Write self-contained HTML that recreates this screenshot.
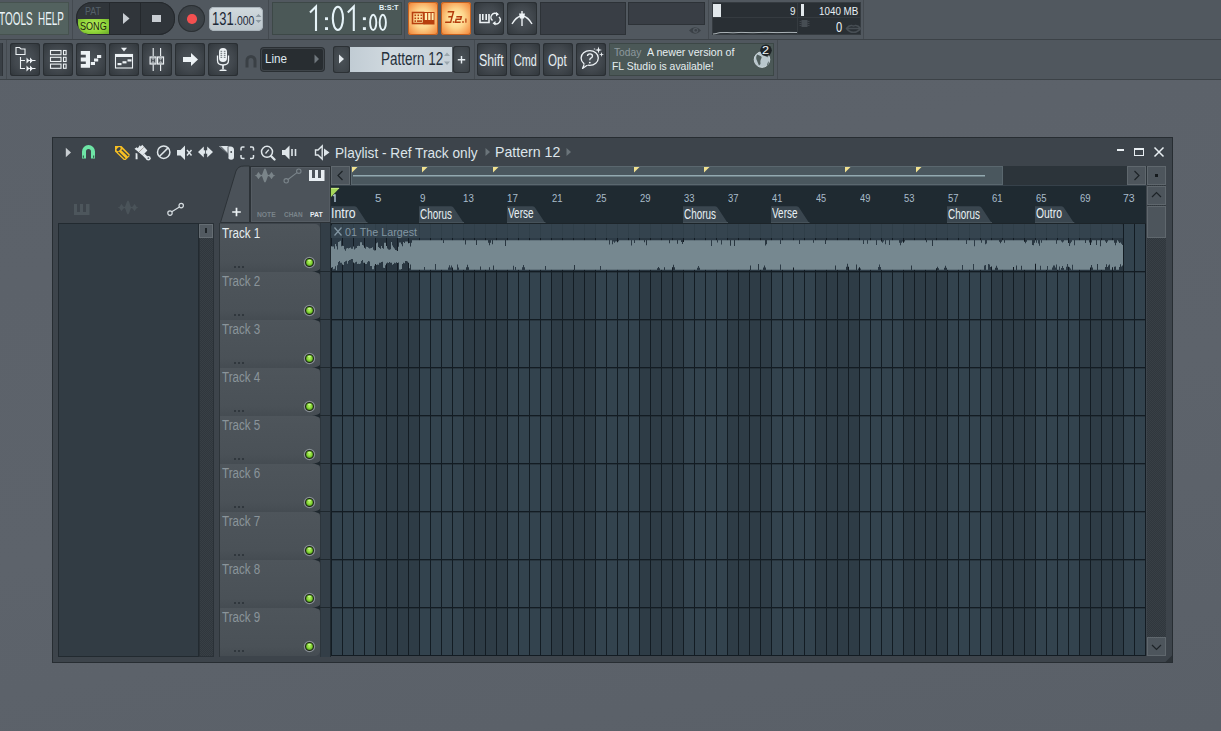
<!DOCTYPE html>
<html><head><meta charset="utf-8">
<style>
*{box-sizing:border-box;margin:0;padding:0}
html,body{width:1221px;height:731px;overflow:hidden}
body{position:relative;font-family:"Liberation Sans",sans-serif;background:linear-gradient(170deg,#5b6169 0%,#5d636b 60%,#5a6068 100%)}
.a{position:absolute}
.t{position:absolute;white-space:pre;line-height:1;transform-origin:0 0}
.dbtn{position:absolute;border-radius:3px;background:radial-gradient(ellipse 62% 62% at 50% 50%,#4b5258 0%,#42484e 55%,#343a3f 100%);box-shadow:inset 0 0 0 1px #2a2f33}
.obtn{position:absolute;border-radius:3px;background:radial-gradient(ellipse 65% 65% at 50% 50%,#fff5b8 0%,#fdd58c 45%,#f7a358 80%,#ee8a3e 100%);box-shadow:inset 0 0 0 1px #c8621f}
</style></head><body>

<svg width="0" height="0" style="position:absolute"><defs><radialGradient id="led" cx="50%" cy="45%" r="55%"><stop offset="0" stop-color="#b4f060"/><stop offset="0.6" stop-color="#86d636"/><stop offset="1" stop-color="#4e9a1c"/></radialGradient></defs></svg>
<div class="a" style="left:0px;top:0px;width:1221px;height:39px;background:#51585f"></div>
<div class="a" style="left:0px;top:39px;width:1221px;height:1px;background:#3c4247"></div>
<div class="a" style="left:0px;top:40px;width:1221px;height:39px;background:#50575e"></div>
<div class="a" style="left:0px;top:79px;width:1221px;height:1px;background:#3c4247"></div>
<div class="a" style="left:72px;top:0px;width:1px;height:39px;background:#444a50"></div>
<div class="a" style="left:268px;top:0px;width:1px;height:39px;background:#444a50"></div>
<div class="a" style="left:404px;top:0px;width:1px;height:39px;background:#444a50"></div>
<div class="a" style="left:708px;top:0px;width:1px;height:39px;background:#444a50"></div>
<div class="a" style="left:863px;top:0px;width:1px;height:39px;background:#444a50"></div>
<div class="a" style="left:6px;top:40px;width:1px;height:39px;background:#444a50"></div>
<div class="a" style="left:474px;top:40px;width:1px;height:39px;background:#444a50"></div>
<div class="a" style="left:777px;top:40px;width:1px;height:39px;background:#444a50"></div>
<div class="a" style="left:0px;top:2px;width:69px;height:33px;background:#53625f;border:1px solid #46524f;border-left:none"></div>
<div class="t" style="left:-1.20px;top:11.15px;font-size:17.66px;color:#eaf4f8;transform:scaleX(0.5670);">TOOLS</div>
<div class="t" style="left:38.20px;top:11.15px;font-size:17.66px;color:#eaf4f8;transform:scaleX(0.5602);">HELP</div>
<div class="a" style="left:76px;top:2px;width:99px;height:33px;background:#30353a;border-radius:16px;box-shadow:inset 0 0 0 1px #25292d"></div>
<div class="a" style="left:109px;top:3px;width:1px;height:31px;background:#24282c"></div>
<div class="a" style="left:140px;top:3px;width:1px;height:31px;background:#24282c"></div>
<div class="a" style="left:78px;top:19px;width:31px;height:15px;background:radial-gradient(ellipse 70% 80% at 50% 40%,#b8f060 0%,#8fd438 60%,#6aa82a 100%);border-bottom-left-radius:10px"></div>
<div class="t" style="left:85.28px;top:7.35px;font-size:10.22px;color:#55616a;transform:scaleX(0.8733);">PAT</div>
<div class="t" style="left:80.09px;top:21.23px;font-size:10.95px;color:#1c2410;transform:scaleX(0.8282);">SONG</div>
<svg class="a" style="left:122px;top:12px;" width="9" height="13" viewBox="0 0 9 13"><path d="M1 1 L7.5 6.5 L1 12 Z" fill="#c8cdd2"/></svg>
<div class="a" style="left:152px;top:15px;width:9px;height:7px;background:#c8cdd2"></div>
<div class="a" style="left:178px;top:5px;width:27px;height:27px;background:radial-gradient(circle at 50% 50%,#41474c 0%,#3a4045 70%,#33393e 100%);border-radius:50%;box-shadow:inset 0 0 0 1px #2b3034"></div>
<div class="a" style="left:187px;top:14px;width:9.5px;height:9.5px;background:#f45050;border-radius:50%"></div>
<div class="a" style="left:209px;top:7px;width:54px;height:24px;background:linear-gradient(#d2dade,#bcc6cc);border-radius:5px;box-shadow:inset 0 0 0 1px #aab4bb"></div>
<div class="t" style="left:212.03px;top:8.94px;font-size:18.98px;color:#1d2938;transform:scaleX(0.6821);">131</div>
<div class="t" style="left:234.06px;top:13.88px;font-size:13.14px;color:#1d2938;transform:scaleX(0.7946);">.000</div>
<svg class="a" style="left:255px;top:13px;" width="7" height="11" viewBox="0 0 7 11"><path d="M0.5 4 L3.5 1 L6.5 4 Z M0.5 7 L3.5 10 L6.5 7 Z" fill="#8e9aa2"/></svg>
<div class="a" style="left:272px;top:2px;width:130px;height:33px;background:#4b5857;box-shadow:inset 0 0 0 1px #3d4847"></div>
<svg class="a" style="left:300px;top:0px;" width="100" height="36" viewBox="0 0 100 36"><g fill="none" stroke="#e6f3f8" stroke-width="2.1">
<path d="M16 31 V6.5 L10 12.5"/>
<ellipse cx="37.9" cy="18.35" rx="5.1" ry="11.6"/>
<path d="M53.8 31 V6.5 L47.8 12.5"/>
</g>
<g stroke="#e6f3f8" stroke-width="1.9" fill="none"><ellipse cx="73.2" cy="22.4" rx="3.1" ry="7.6"/><ellipse cx="82.8" cy="22.4" rx="3.1" ry="7.6"/></g>
<g fill="#e6f3f8"><rect x="25" y="17.3" width="3" height="2.8"/><rect x="25" y="27.2" width="3" height="2.8"/><rect x="62.9" y="17.3" width="3" height="2.8"/><rect x="62.9" y="27.2" width="3" height="2.8"/></g></svg>
<div class="t" style="left:379.02px;top:4.89px;font-size:6.86px;color:#e4f2f8;font-weight:bold;transform:scaleX(1.0692);">B:S:T</div>
<div class="obtn" style="left:408px;top:2px;width:30px;height:33px"></div>
<div class="obtn" style="left:441px;top:2px;width:30px;height:33px"></div>
<svg class="a" style="left:411px;top:11px;" width="25" height="15" viewBox="0 0 25 15"><rect x="1.5" y="1.5" width="11" height="11" fill="none" stroke="#b8400e" stroke-width="1.6"/>
<g fill="#b8400e"><rect x="3.5" y="3.5" width="1.6" height="1.6"/><rect x="6.5" y="3.5" width="1.6" height="1.6"/><rect x="9.5" y="3.5" width="1.6" height="1.6"/>
<rect x="3.5" y="6.5" width="1.6" height="1.6"/><rect x="6.5" y="6.5" width="1.6" height="1.6"/><rect x="9.5" y="6.5" width="1.6" height="1.6"/>
<rect x="3.5" y="9.3" width="1.6" height="1.6"/><rect x="6" y="9.3" width="5" height="1.6"/>
<rect x="12.5" y="1" width="11" height="12.5"/></g>
<g fill="#ffeeb0"><rect x="13.8" y="2" width="2.3" height="7"/><rect x="17.2" y="2" width="2.3" height="7"/><rect x="20.6" y="2" width="2" height="7"/></g></svg>
<svg class="a" style="left:443px;top:10px;" width="26" height="16" viewBox="0 0 26 16"><g transform="skewX(-10) translate(2 0)" fill="none" stroke="#b53c0c" stroke-width="1.5" stroke-linejoin="miter"><path d="M3 1.8 H8.8 L8.3 6.8 H4.5 M8.3 6.8 L7.8 12.2 H2.3"/><path d="M12.5 6.8 H17.5 L17.3 9.3 H12.8 L12.6 12.2 H17.8"/></g><g fill="#b53c0c"><rect x="9.8" y="11.2" width="1.6" height="1.6"/><rect x="19.2" y="11.2" width="1.6" height="1.6"/><rect x="22.3" y="8.5" width="1.2" height="4.2"/></g></svg>
<div class="dbtn" style="left:474px;top:2px;width:30px;height:33px"></div>
<div class="dbtn" style="left:507px;top:2px;width:30px;height:33px"></div>
<svg class="a" style="left:478px;top:10px;" width="24" height="17" viewBox="0 0 24 17"><path d="M2 4 V12.5 H11 V4 M4.8 4 V10 M8.2 4 V10" fill="none" stroke="#eef3f6" stroke-width="1.6"/>
<path d="M14.5 10.5 A4 4 0 0 1 19.5 4.2" fill="none" stroke="#eef3f6" stroke-width="1.5"/>
<path d="M21 7 A4 4 0 0 1 16 13.2" fill="none" stroke="#eef3f6" stroke-width="1.5"/>
<path d="M18 2 L21 4.3 L18 6.5 Z M17.5 11 L14.5 13.2 L17.5 15.5 Z" fill="#eef3f6"/></svg>
<svg class="a" style="left:509px;top:9px;" width="26" height="19" viewBox="0 0 26 19"><path d="M3 15 Q7 8 12 7 M14 7 Q19 8 23 15" fill="none" stroke="#eef3f6" stroke-width="1.4"/>
<path d="M13 2 V17" stroke="#eef3f6" stroke-width="1.4"/>
<path d="M10 4.5 H16 L15 9.5 H11 Z" fill="#eef3f6"/></svg>
<div class="a" style="left:540px;top:2px;width:86px;height:33px;background:#393e45;box-shadow:inset 0 0 0 1px #2d3237"></div>
<div class="a" style="left:628px;top:2px;width:77px;height:23px;background:#393e45;box-shadow:inset 0 0 0 1px #2d3237"></div>
<svg class="a" style="left:688px;top:25px;" width="14" height="11" viewBox="0 0 14 11"><path d="M1 5.5 Q7 -1 13 5.5 Q7 12 1 5.5 Z" fill="#3a4046"/><circle cx="7.5" cy="5.3" r="2.6" fill="#51585f"/><circle cx="7.8" cy="5.3" r="1.3" fill="#3a4046"/></svg>
<div class="a" style="left:712px;top:2px;width:149px;height:33px;background:#292f34;box-shadow:inset 0 0 0 1px #353b40"></div>
<div class="a" style="left:713px;top:17px;width:148px;height:1px;background:#353b40"></div>
<div class="a" style="left:797px;top:3px;width:1px;height:31px;background:#353b40"></div>
<div class="a" style="left:713px;top:4px;width:8px;height:13px;background:#e2e8ec"></div>
<div class="t" style="left:790.46px;top:6.09px;font-size:11.82px;color:#e8f0f4;transform:scaleX(0.8361);">9</div>
<div class="a" style="left:801px;top:4px;width:2.5px;height:12px;background:#e2e8ec"></div>
<div class="t" style="left:819.26px;top:6.09px;font-size:11.82px;color:#e8f0f4;transform:scaleX(0.8310);">1040 MB</div>
<div class="t" style="left:835.52px;top:19.00px;font-size:15.47px;color:#e8f0f4;transform:scaleX(0.7177);">0</div>
<svg class="a" style="left:799px;top:19px;" width="11" height="9" viewBox="0 0 11 9"><rect x="2.5" y="1" width="6" height="7" fill="#464d53"/><g stroke="#464d53" stroke-width="0.8"><path d="M0.5 2.5H2.5M0.5 4.5H2.5M0.5 6.5H2.5M8.5 2.5H10.5M8.5 4.5H10.5M8.5 6.5H10.5"/></g></svg>
<svg class="a" style="left:845px;top:23px;" width="17" height="11" viewBox="0 0 17 11"><path d="M1.5 5.5 Q4 2 7 2.6 Q8.5 3.2 10 2.6 Q13 2 15.5 5.5 Q13 9.3 8.5 9.3 Q4 9.3 1.5 5.5 Z M1.8 5.5 H15.2" fill="none" stroke="#474e54" stroke-width="1.5"/></svg>
<svg class="a" style="left:713px;top:18px;" width="84" height="17" viewBox="0 0 84 17"><path d="M0 16 L3 15.6 L5 15 L7 14.6 L14 14.5 L20 14.8 L28 14.4 L40 14.7 L52 14.3 L64 14.6 L76 14.4 L84 14.5" fill="none" stroke="#b9c1c5" stroke-width="0.9"/></svg>
<div class="a" style="left:0px;top:43px;width:3px;height:33px;background:#393f45;box-shadow:inset -1px 0 0 #2f3439"></div>
<div class="dbtn" style="left:10px;top:43px;width:30px;height:33px"></div>
<div class="dbtn" style="left:43px;top:43px;width:30px;height:33px"></div>
<div class="dbtn" style="left:76px;top:43px;width:30px;height:33px"></div>
<div class="dbtn" style="left:109px;top:43px;width:30px;height:33px"></div>
<div class="dbtn" style="left:142px;top:43px;width:30px;height:33px"></div>
<div class="dbtn" style="left:175px;top:43px;width:30px;height:33px"></div>
<div class="dbtn" style="left:208px;top:43px;width:30px;height:33px"></div>
<svg class="a" style="left:10px;top:43px;" width="30" height="33" viewBox="0 0 30 33"><path d="M6 4.5 H9.5 L11 6 H15 V11.5 H6 Z" fill="none" stroke="#edf2f5" stroke-width="1.1"/>
<path d="M10.5 14 V25.5 H15 M10.5 17.5 H15" fill="none" stroke="#edf2f5" stroke-width="1.1"/>
<path d="M16.5 14.5 L19.5 17.5 L16.5 20.5 Z M19 17 H25.5 M20 14.5 L23 17.5 L20 20.5 Z" fill="#edf2f5"/>
<path d="M16.5 22.5 L19.5 25.5 L16.5 28.5 Z M19 25 H25.5 M20 22.5 L23 25.5 L20 28.5 Z" fill="#edf2f5"/>
<path d="M19 17.5 H25.5 M19 25.5 H25.5" stroke="#edf2f5" stroke-width="1"/></svg>
<svg class="a" style="left:43px;top:43px;" width="30" height="33" viewBox="0 0 30 33"><g fill="none" stroke="#edf2f5" stroke-width="1.1"><rect x="7.5" y="7.5" width="10.5" height="4.2"/><rect x="7.5" y="14.3" width="10.5" height="4.2"/><rect x="7.5" y="21.1" width="10.5" height="4.2"/>
<rect x="20.5" y="7.5" width="2.6" height="4.2"/><rect x="20.5" y="14.3" width="2.6" height="4.2"/><rect x="20.5" y="21.1" width="2.6" height="4.2"/></g></svg>
<svg class="a" style="left:76px;top:43px;" width="30" height="33" viewBox="0 0 30 33"><path d="M4.8 8 H14 V24.8 H4.8 V21 H9.8 V18.4 H4.8 V14.4 H9.8 V11.8 H4.8 Z" fill="#edf2f5"/>
<rect x="14.8" y="19" width="4.2" height="3" fill="#edf2f5"/><rect x="18" y="15.5" width="4.2" height="3" fill="#edf2f5"/><rect x="21" y="12" width="4.2" height="3" fill="#edf2f5"/></svg>
<svg class="a" style="left:109px;top:43px;" width="30" height="33" viewBox="0 0 30 33"><path d="M12 4.8 H18 L15 8.5 Z" fill="#edf2f5"/>
<rect x="6.5" y="11.5" width="17" height="13.5" fill="none" stroke="#edf2f5" stroke-width="1.1"/><rect x="6" y="11" width="18" height="3" fill="#edf2f5"/>
<rect x="8.5" y="20" width="4" height="2.2" fill="#edf2f5"/><rect x="13.5" y="18.2" width="4" height="2.2" fill="#edf2f5"/><rect x="18.5" y="16.3" width="4" height="2.2" fill="#edf2f5"/></svg>
<svg class="a" style="left:142px;top:43px;" width="30" height="33" viewBox="0 0 30 33"><path d="M11.2 5 V13 M11.2 21.5 V28 M18.6 5 V13 M18.6 21.5 V28" stroke="#edf2f5" stroke-width="1.1"/>
<g fill="none" stroke="#edf2f5" stroke-width="1.2"><rect x="8.1" y="14" width="5.9" height="7"/><rect x="15.6" y="14" width="5.9" height="7"/></g>
<g fill="#edf2f5"><path d="M8.6 14.5 H13.5 L11.05 17.5 Z M8.6 20.5 H13.5 L11.05 17.5 Z M16.1 14.5 H21 L18.55 17.5 Z M16.1 20.5 H21 L18.55 17.5 Z" opacity="0.55"/></g></svg>
<svg class="a" style="left:175px;top:43px;" width="30" height="33" viewBox="0 0 30 33"><path d="M8 14 H16 V10 L23 16.5 L16 23 V19 H8 Z" fill="#edf2f5"/></svg>
<svg class="a" style="left:208px;top:43px;" width="30" height="33" viewBox="0 0 30 33"><rect x="11" y="5" width="8" height="14" rx="4" fill="#edf2f5"/>
<g stroke="#555c62" stroke-width="0.9"><path d="M12.5 8.3H14.2M15.8 8.3H17.5M12.5 10.3H14.2M15.8 10.3H17.5M12.5 12.3H14.2M15.8 12.3H17.5M12.5 14.3H14.2M15.8 14.3H17.5"/></g>
<path d="M9.5 12.5 V17.5 Q9.5 22 15 22 Q20.5 22 20.5 17.5 V12.5" fill="none" stroke="#edf2f5" stroke-width="1.3"/>
<path d="M14.2 22 V26 H15.8 V22 Z M11.5 27 Q15 25.5 18.5 27 V28 H11.5 Z" fill="#edf2f5"/></svg>
<svg class="a" style="left:244px;top:54px;" width="14" height="15" viewBox="0 0 14 15"><path d="M1.5 13.5 V6.5 A5.5 5.5 0 0 1 12.5 6.5 V13.5 H9.5 V6.5 A2.5 2.5 0 0 0 4.5 6.5 V13.5 Z" fill="#3a4045"/></svg>
<div class="a" style="left:261px;top:48px;width:63px;height:23px;background:#282d31;border-radius:3px;box-shadow:inset 0 0 0 1px #3e4449,0 0 0 1px #2a2f33"></div>
<div class="t" style="left:264.57px;top:52.50px;font-size:12.41px;color:#dfe8ee;transform:scaleX(0.9427);">Line</div>
<svg class="a" style="left:314px;top:54px;" width="6" height="10" viewBox="0 0 6 10"><path d="M0.5 0.5 L5 5 L0.5 9.5 Z" fill="#6f777d"/></svg>
<div class="a" style="left:333px;top:46px;width:17px;height:27px;background:radial-gradient(ellipse at 50% 50%,#4b5258,#3a4045);border-radius:3px;box-shadow:inset 0 0 0 1px #2c3135"></div>
<svg class="a" style="left:338px;top:54px;" width="8" height="10" viewBox="0 0 8 10"><path d="M1 0.5 L6 5 L1 9.5 Z" fill="#e4eaee"/></svg>
<div class="a" style="left:350px;top:47px;width:102px;height:25px;background:linear-gradient(90deg,#c1ccd4 0%,#d0d9df 40%,#c8d2d9 100%)"></div>
<div class="t" style="left:380.92px;top:50.48px;font-size:18.69px;color:#25303a;transform:scaleX(0.7225);">Pattern 12</div>
<svg class="a" style="left:443px;top:50px;" width="8" height="18" viewBox="0 0 8 18"><path d="M1 6 L4 2.5 L7 6 Z M1 11.5 L4 15 L7 11.5 Z" fill="#9aa6ad"/></svg>
<div class="a" style="left:453px;top:46px;width:17px;height:27px;background:radial-gradient(ellipse at 50% 50%,#4b5258,#3a4045);border-radius:3px;box-shadow:inset 0 0 0 1px #2c3135"></div>
<svg class="a" style="left:455px;top:51px;" width="13" height="17" viewBox="0 0 13 17"><path d="M6.5 5 V12.5 M2.8 8.8 H10.2" stroke="#e8eef2" stroke-width="1.4"/></svg>
<div class="dbtn" style="left:477px;top:43px;width:30px;height:33px"></div>
<div class="dbtn" style="left:510px;top:43px;width:30px;height:33px"></div>
<div class="dbtn" style="left:543px;top:43px;width:30px;height:33px"></div>
<div class="dbtn" style="left:576px;top:43px;width:30px;height:33px"></div>
<div class="t" style="left:479.46px;top:52.94px;font-size:15.83px;color:#e6eef2;transform:scaleX(0.7802);">Shift</div>
<div class="t" style="left:513.94px;top:52.38px;font-size:16.20px;color:#e6eef2;transform:scaleX(0.6697);">Cmd</div>
<div class="t" style="left:548.45px;top:52.38px;font-size:16.20px;color:#e6eef2;transform:scaleX(0.7140);">Opt</div>
<svg class="a" style="left:576px;top:43px;" width="30" height="33" viewBox="0 0 30 33"><ellipse cx="13.7" cy="15" rx="8.6" ry="7.3" fill="none" stroke="#edf2f5" stroke-width="1.3"/>
<path d="M8.5 20.5 L6.5 25.5 L11.5 22" fill="#3f454b" stroke="#edf2f5" stroke-width="1.2" stroke-linejoin="round"/>
<path d="M8.3 20.8 L11.8 21.5" stroke="#40464c" stroke-width="1.3"/>
<path d="M11.5 13 Q11.5 10.8 14 10.8 Q16.5 10.8 16.5 13 Q16.5 14.6 14.5 15.3 Q13.8 15.8 13.8 17.2" fill="none" stroke="#edf2f5" stroke-width="1.3"/>
<circle cx="13.8" cy="19.6" r="0.9" fill="#edf2f5"/>
<path d="M22.5 3.5 L23.3 6.2 L26 7 L23.3 7.8 L22.5 10.5 L21.7 7.8 L19 7 L21.7 6.2 Z" fill="#edf2f5"/>
<path d="M25.5 9 L26.1 10.9 L28 11.5 L26.1 12.1 L25.5 14 L24.9 12.1 L23 11.5 L24.9 10.9 Z" fill="#edf2f5"/>
<circle cx="18.5" cy="6" r="0.8" fill="#edf2f5" opacity="0.7"/></svg>
<div class="a" style="left:609px;top:43px;width:165px;height:33px;background:#4b5857;box-shadow:inset 0 0 0 1px #3c4746"></div>
<div class="t" style="left:613.79px;top:47.26px;font-size:10.80px;color:#8d999e;transform:scaleX(0.9457);">Today</div>
<div class="t" style="left:646.50px;top:47.26px;font-size:10.80px;color:#e6eef0;transform:scaleX(0.9845);">A newer version of</div>
<div class="t" style="left:612.17px;top:61.21px;font-size:11.09px;color:#e6eef0;transform:scaleX(0.9416);">FL Studio is available!</div>
<svg class="a" style="left:750px;top:42px;" width="26" height="30" viewBox="0 0 26 30"><circle cx="12" cy="17.6" r="7.8" fill="#b9c7cd" stroke="#d5e0e4" stroke-width="0.8"/>
<path d="M7 12.5 Q9 13 10.5 14 Q12.5 15 11 17 Q9.8 19 10.5 22 L9 23.5 Q7.5 20 6.3 17 Q6 14.5 7 12.5 Z" fill="#4f5d5c"/>
<path d="M14.5 11 Q17.5 12.5 18.5 15 Q16.5 15.5 15 14 Z M18.5 19 Q19.5 22 17 24 Q17 21.5 18.5 19 Z" fill="#5c6a6b"/>
<circle cx="16" cy="8.3" r="5.8" fill="#1d2326"/></svg>
<div class="t" style="left:762.08px;top:45.14px;font-size:11.53px;color:#f0f4f6;transform:scaleX(1.1045);">2</div>
<div class="a" style="left:52px;top:137px;width:1121px;height:526px;background:#3d444b;box-shadow:inset 0 0 0 1px #272d32"></div>
<svg class="a" style="left:64px;top:146px;" width="9" height="13" viewBox="0 0 9 13"><path d="M1.8 1.8 L7 6.5 L1.8 11.2 Z" fill="#c9ced2"/></svg>
<svg class="a" style="left:80px;top:144px;" width="17" height="16" viewBox="0 0 17 16"><path d="M2 14.5 V7.5 A6.5 6.5 0 0 1 15 7.5 V14.5 H11 V7.5 A2.5 2.5 0 0 0 6 7.5 V14.5 Z" fill="#6ee5a6"/><path d="M3.3 11.5 V13.8 M13.7 11.5 V13.8" stroke="#2a4a3c" stroke-width="1"/></svg>
<svg class="a" style="left:113px;top:144px;" width="18" height="18" viewBox="0 0 18 18"><path d="M2 2 H8.5 L16.5 10.3 V12.3 L12.6 16 H10.8 L2 7.6 Z" fill="#f7bf22"/><ellipse cx="5.6" cy="5.1" rx="2.4" ry="1.5" transform="rotate(-40 5.6 5.1)" fill="#3d444b"/><path d="M5.4 8 L12.2 14.6 M8.8 5.8 L15.3 12" stroke="#3d444b" stroke-width="1.3"/></svg>
<svg class="a" style="left:132px;top:143px;" width="20" height="18" viewBox="0 0 20 18"><path d="M2.5 5.8 L4.8 4.2 L5.8 5.2 L7.8 2.2 L8.8 3.4 L10.2 1.8 L15.4 7.6 L10.6 12.6 Z" fill="#e2e8ec"/>
<path d="M6.8 9.2 L11.8 4.3" stroke="#8a8078" stroke-width="0.7"/>
<path d="M11.5 11.5 L16 16" stroke="#e2e8ec" stroke-width="2.6"/>
<circle cx="16.4" cy="15.2" r="2.3" fill="#e2e8ec"/><circle cx="16.4" cy="15.2" r="0.9" fill="#5a6470"/>
<path d="M3.6 10 L5.4 10.5 L5.6 16.2 L3.6 16.2 Z" fill="#e2e8ec"/></svg>
<svg class="a" style="left:156px;top:145px;" width="16" height="16" viewBox="0 0 16 16"><circle cx="7.7" cy="7.2" r="6.2" fill="none" stroke="#dfe6ea" stroke-width="1.5"/><path d="M3.6 11.3 L11.8 3.1" stroke="#dfe6ea" stroke-width="1.5"/></svg>
<svg class="a" style="left:176px;top:144px;" width="18" height="17" viewBox="0 0 18 17"><path d="M1 5.5 H4.5 L9 1 V15.5 L4.5 11 H1 Z" fill="#dfe6ea" transform="translate(0 0.5)"/><path d="M11 6 L15.5 11.5 M15.5 6 L11 11.5" stroke="#dfe6ea" stroke-width="1.4"/></svg>
<svg class="a" style="left:197px;top:145px;" width="17" height="15" viewBox="0 0 17 15"><path d="M1 7 L6.8 1.5 V12.5 Z M16 7 L10.2 1.5 V12.5 Z" fill="#dfe6ea"/><rect x="6" y="5.3" width="2.1" height="3.4" fill="#dfe6ea"/><rect x="8.9" y="5.3" width="2.1" height="3.4" fill="#dfe6ea"/></svg>
<svg class="a" style="left:218px;top:145px;" width="18" height="16" viewBox="0 0 18 16"><path d="M1 1 H10 L11 10 Z" fill="#dfe6ea"/><path d="M2.6 1.3 L10.6 9.3" stroke="#3d444b" stroke-width="1"/><path d="M10 1.5 H12.5 Q16 1.5 16 5 V12 Q16 14.8 13.2 14.8 Q10.2 14.8 10.2 12 Z" fill="#dfe6ea"/><path d="M10 1.5 V12.5" stroke="#3d444b" stroke-width="0.8"/><circle cx="13.2" cy="7" r="0.9" fill="#3d444b"/></svg>
<svg class="a" style="left:240px;top:146px;" width="15" height="14" viewBox="0 0 15 14"><path d="M1 4.5 V2.5 Q1 1 2.5 1 H4.5 M10 1 H12 Q13.5 1 13.5 2.5 V4.5 M13.5 9 V11 Q13.5 12.5 12 12.5 H10 M4.5 12.5 H2.5 Q1 12.5 1 11 V9" fill="none" stroke="#dfe6ea" stroke-width="1.5"/></svg>
<svg class="a" style="left:260px;top:145px;" width="17" height="16" viewBox="0 0 17 16"><circle cx="7" cy="6.8" r="5.5" fill="none" stroke="#dfe6ea" stroke-width="1.5"/><path d="M11 11 L14.5 14.5" stroke="#dfe6ea" stroke-width="2.3" stroke-linecap="round"/><path d="M5.5 8.5 L8.8 4.6" stroke="#dfe6ea" stroke-width="1.3"/></svg>
<svg class="a" style="left:281px;top:144px;" width="17" height="17" viewBox="0 0 17 17"><path d="M1 6 H4 L8.5 1.5 V15.5 L4 11 H1 Z" fill="#dfe6ea"/><path d="M11 5 V12 M14.5 5 V12" stroke="#dfe6ea" stroke-width="1.6"/></svg>
<svg class="a" style="left:314px;top:144px;" width="17" height="17" viewBox="0 0 17 17"><path d="M1.5 6 H4 L8.2 2 V15 L4 11 H1.5 Z" fill="none" stroke="#dfe6ea" stroke-width="1.4"/><path d="M10 4.5 L15.5 8.5 L10 12.5 Z" fill="#dfe6ea"/></svg>
<div class="t" style="left:334.91px;top:145.69px;font-size:14.31px;color:#dde5ea;transform:scaleX(0.9539);">Playlist - Ref Track only</div>
<svg class="a" style="left:485px;top:147px;" width="6" height="10" viewBox="0 0 6 10"><path d="M0.5 1 L5 5 L0.5 9 Z" fill="#6b747a"/></svg>
<div class="t" style="left:495.37px;top:144.69px;font-size:14.31px;color:#dde5ea;transform:scaleX(0.9904);">Pattern 12</div>
<svg class="a" style="left:566px;top:147px;" width="6" height="10" viewBox="0 0 6 10"><path d="M0.5 1 L5 5 L0.5 9 Z" fill="#6b747a"/></svg>
<div class="a" style="left:1117px;top:149px;width:7px;height:2px;background:#e8eef2"></div>
<div class="a" style="left:1134px;top:148px;width:10px;height:8px;border:1.2px solid #e8eef2;border-top-width:2.2px"></div>
<svg class="a" style="left:1153px;top:146px;" width="12" height="12" viewBox="0 0 12 12"><path d="M1.5 1.5 L10.5 10.5 M10.5 1.5 L1.5 10.5" stroke="#e8eef2" stroke-width="1.5"/></svg>
<svg class="a" style="left:73px;top:203px;" width="18" height="14" viewBox="0 0 18 14"><path d="M1 1 H16.5 V12 H1 Z M4 1 V9 H7 V1 Z M10 1 V9 H13 V1 Z" fill="#4d565c" fill-rule="evenodd"/></svg>
<svg class="a" style="left:117px;top:200px;" width="23" height="16" viewBox="0 0 23 16"><path d="M0.6,7.5 Q3,7.2 4,4.5 Q4.5,3.5 5,4.5 Q6,7 7.8,7.1 C8.8,6 9.8,0.6 11,0.6 C12.2,0.6 13.2,6 14.2,7.1 Q16,7 17,4.5 Q17.5,3.5 18,4.5 Q19,7.2 21.4,7.5 Q19,7.8 18,10.5 Q17.5,11.5 17,10.5 Q16,8 14.2,7.9 C13.2,9 12.2,14.4 11,14.4 C9.8,14.4 8.8,9 7.8,7.9 Q6,8 5,10.5 Q4.5,11.5 4,10.5 Q3,7.8 0.6,7.5 Z" fill="#4a5359"/></svg>
<svg class="a" style="left:165px;top:201px;" width="20" height="16" viewBox="0 0 20 16"><circle cx="5" cy="12.1" r="2.2" fill="none" stroke="#d6dde1" stroke-width="1.2"/><circle cx="16.2" cy="4.6" r="2.2" fill="none" stroke="#d6dde1" stroke-width="1.2"/><path d="M6.8 10.8 L14.4 5.9" stroke="#d6dde1" stroke-width="1.2"/></svg>
<div class="a" style="left:58px;top:223px;width:141px;height:434px;background:#323c44;box-shadow:inset 0 0 0 1px #222a30"></div>
<div class="a" style="left:199px;top:223px;width:15px;height:434px;background:repeating-conic-gradient(#30373d 0 25%,#383f45 0 50%) 0 0/2px 2px;box-shadow:inset 0 0 0 1px #2a3137"></div>
<div class="a" style="left:199px;top:224px;width:14px;height:14px;background:#525a61;box-shadow:inset 0 0 0 1px #656d73"></div>
<div class="a" style="left:205px;top:228px;width:2px;height:5px;background:#1f2529"></div>
<svg class="a" style="left:218px;top:165px;" width="33" height="59" viewBox="0 0 33 59"><path d="M2.5 57.5 L18 6 Q20 1 26 1 H31.5 V57.5 Z" fill="#4b5259" stroke="#2c3237" stroke-width="1"/></svg>
<svg class="a" style="left:231px;top:207px;" width="11" height="10" viewBox="0 0 11 10"><path d="M5.5 0.8 V9.2 M1.2 5 H9.8" stroke="#eef3f6" stroke-width="1.7"/></svg>
<div class="a" style="left:250px;top:166px;width:81px;height:57px;background:#4c535a;box-shadow:inset 0 0 0 1px #2c3237,inset 0 0 0 2px #555c63"></div>
<svg class="a" style="left:254px;top:168px;" width="23" height="16" viewBox="0 0 23 16"><path d="M0.6,7.5 Q3,7.2 4,4.5 Q4.5,3.5 5,4.5 Q6,7 7.8,7.1 C8.8,6 9.8,0.6 11,0.6 C12.2,0.6 13.2,6 14.2,7.1 Q16,7 17,4.5 Q17.5,3.5 18,4.5 Q19,7.2 21.4,7.5 Q19,7.8 18,10.5 Q17.5,11.5 17,10.5 Q16,8 14.2,7.9 C13.2,9 12.2,14.4 11,14.4 C9.8,14.4 8.8,9 7.8,7.9 Q6,8 5,10.5 Q4.5,11.5 4,10.5 Q3,7.8 0.6,7.5 Z" fill="#7a8489"/></svg>
<svg class="a" style="left:283px;top:168px;" width="19" height="16" viewBox="0 0 19 16"><circle cx="3.2" cy="12.8" r="2.2" fill="none" stroke="#7a848a" stroke-width="1.1"/><circle cx="15.8" cy="3.2" r="2.2" fill="none" stroke="#7a848a" stroke-width="1.1"/><path d="M5 11.5 L14 4.6" stroke="#7a848a" stroke-width="1.1"/></svg>
<svg class="a" style="left:308px;top:169px;" width="18" height="14" viewBox="0 0 18 14"><path d="M1 1 H16.5 V12 H1 Z M4 1 V9 H7 V1 Z M10 1 V9 H13 V1 Z" fill="#e8eef2" fill-rule="evenodd"/></svg>
<div class="t" style="left:256.54px;top:211.32px;font-size:7.30px;color:#7a848a;font-weight:bold;transform:scaleX(0.9244);">NOTE</div>
<div class="t" style="left:283.74px;top:211.32px;font-size:7.30px;color:#7a848a;font-weight:bold;transform:scaleX(0.8871);">CHAN</div>
<div class="t" style="left:310.04px;top:212.34px;font-size:7.15px;color:#e8eef2;font-weight:bold;transform:scaleX(0.9633);">PAT</div>
<div class="a" style="left:219px;top:223px;width:1px;height:434px;background:#2e353a"></div>
<div class="a" style="left:220px;top:224px;width:100px;height:48px;background:linear-gradient(180deg,#4e555b 0%,#4a5157 80%,#454c52 100%);border-radius:0 5px 5px 0"></div>
<div class="t" style="left:222.26px;top:226.76px;font-size:13.89px;color:#e6eef2;transform:scaleX(0.8368);">Track 1</div>
<div class="a" style="left:234px;top:266px;width:2px;height:2px;background:#30373d"></div>
<div class="a" style="left:238px;top:266px;width:2px;height:2px;background:#30373d"></div>
<div class="a" style="left:242px;top:266px;width:2px;height:2px;background:#30373d"></div>
<svg class="a" style="left:303px;top:256px" width="13" height="13"><circle cx="6.5" cy="6.5" r="5.1" fill="#1c2414" stroke="#878e94" stroke-width="1.2"/><circle cx="6.5" cy="6.5" r="3.4" fill="url(#led)"/><ellipse cx="6.5" cy="4.6" rx="1.8" ry="0.8" fill="#e0ffb0" opacity="0.7"/></svg>
<div class="a" style="left:220px;top:272px;width:100px;height:48px;background:linear-gradient(180deg,#4e555b 0%,#4a5157 80%,#454c52 100%);border-radius:0 5px 5px 0"></div>
<div class="t" style="left:222.26px;top:274.76px;font-size:13.89px;color:#8a949a;transform:scaleX(0.8381);">Track 2</div>
<div class="a" style="left:234px;top:314px;width:2px;height:2px;background:#30373d"></div>
<div class="a" style="left:238px;top:314px;width:2px;height:2px;background:#30373d"></div>
<div class="a" style="left:242px;top:314px;width:2px;height:2px;background:#30373d"></div>
<svg class="a" style="left:303px;top:304px" width="13" height="13"><circle cx="6.5" cy="6.5" r="5.1" fill="#1c2414" stroke="#878e94" stroke-width="1.2"/><circle cx="6.5" cy="6.5" r="3.4" fill="url(#led)"/><ellipse cx="6.5" cy="4.6" rx="1.8" ry="0.8" fill="#e0ffb0" opacity="0.7"/></svg>
<div class="a" style="left:220px;top:320px;width:100px;height:48px;background:linear-gradient(180deg,#4e555b 0%,#4a5157 80%,#454c52 100%);border-radius:0 5px 5px 0"></div>
<div class="t" style="left:222.26px;top:322.76px;font-size:13.89px;color:#8a949a;transform:scaleX(0.8355);">Track 3</div>
<div class="a" style="left:234px;top:362px;width:2px;height:2px;background:#30373d"></div>
<div class="a" style="left:238px;top:362px;width:2px;height:2px;background:#30373d"></div>
<div class="a" style="left:242px;top:362px;width:2px;height:2px;background:#30373d"></div>
<svg class="a" style="left:303px;top:352px" width="13" height="13"><circle cx="6.5" cy="6.5" r="5.1" fill="#1c2414" stroke="#878e94" stroke-width="1.2"/><circle cx="6.5" cy="6.5" r="3.4" fill="url(#led)"/><ellipse cx="6.5" cy="4.6" rx="1.8" ry="0.8" fill="#e0ffb0" opacity="0.7"/></svg>
<div class="a" style="left:220px;top:368px;width:100px;height:48px;background:linear-gradient(180deg,#4e555b 0%,#4a5157 80%,#454c52 100%);border-radius:0 5px 5px 0"></div>
<div class="t" style="left:222.27px;top:370.76px;font-size:13.89px;color:#8a949a;transform:scaleX(0.8329);">Track 4</div>
<div class="a" style="left:234px;top:410px;width:2px;height:2px;background:#30373d"></div>
<div class="a" style="left:238px;top:410px;width:2px;height:2px;background:#30373d"></div>
<div class="a" style="left:242px;top:410px;width:2px;height:2px;background:#30373d"></div>
<svg class="a" style="left:303px;top:400px" width="13" height="13"><circle cx="6.5" cy="6.5" r="5.1" fill="#1c2414" stroke="#878e94" stroke-width="1.2"/><circle cx="6.5" cy="6.5" r="3.4" fill="url(#led)"/><ellipse cx="6.5" cy="4.6" rx="1.8" ry="0.8" fill="#e0ffb0" opacity="0.7"/></svg>
<div class="a" style="left:220px;top:416px;width:100px;height:48px;background:linear-gradient(180deg,#4e555b 0%,#4a5157 80%,#454c52 100%);border-radius:0 5px 5px 0"></div>
<div class="t" style="left:222.26px;top:418.76px;font-size:13.89px;color:#8a949a;transform:scaleX(0.8355);">Track 5</div>
<div class="a" style="left:234px;top:458px;width:2px;height:2px;background:#30373d"></div>
<div class="a" style="left:238px;top:458px;width:2px;height:2px;background:#30373d"></div>
<div class="a" style="left:242px;top:458px;width:2px;height:2px;background:#30373d"></div>
<svg class="a" style="left:303px;top:448px" width="13" height="13"><circle cx="6.5" cy="6.5" r="5.1" fill="#1c2414" stroke="#878e94" stroke-width="1.2"/><circle cx="6.5" cy="6.5" r="3.4" fill="url(#led)"/><ellipse cx="6.5" cy="4.6" rx="1.8" ry="0.8" fill="#e0ffb0" opacity="0.7"/></svg>
<div class="a" style="left:220px;top:464px;width:100px;height:48px;background:linear-gradient(180deg,#4e555b 0%,#4a5157 80%,#454c52 100%);border-radius:0 5px 5px 0"></div>
<div class="t" style="left:222.26px;top:466.76px;font-size:13.89px;color:#8a949a;transform:scaleX(0.8355);">Track 6</div>
<div class="a" style="left:234px;top:506px;width:2px;height:2px;background:#30373d"></div>
<div class="a" style="left:238px;top:506px;width:2px;height:2px;background:#30373d"></div>
<div class="a" style="left:242px;top:506px;width:2px;height:2px;background:#30373d"></div>
<svg class="a" style="left:303px;top:496px" width="13" height="13"><circle cx="6.5" cy="6.5" r="5.1" fill="#1c2414" stroke="#878e94" stroke-width="1.2"/><circle cx="6.5" cy="6.5" r="3.4" fill="url(#led)"/><ellipse cx="6.5" cy="4.6" rx="1.8" ry="0.8" fill="#e0ffb0" opacity="0.7"/></svg>
<div class="a" style="left:220px;top:512px;width:100px;height:48px;background:linear-gradient(180deg,#4e555b 0%,#4a5157 80%,#454c52 100%);border-radius:0 5px 5px 0"></div>
<div class="t" style="left:222.26px;top:514.76px;font-size:13.89px;color:#8a949a;transform:scaleX(0.8381);">Track 7</div>
<div class="a" style="left:234px;top:554px;width:2px;height:2px;background:#30373d"></div>
<div class="a" style="left:238px;top:554px;width:2px;height:2px;background:#30373d"></div>
<div class="a" style="left:242px;top:554px;width:2px;height:2px;background:#30373d"></div>
<svg class="a" style="left:303px;top:544px" width="13" height="13"><circle cx="6.5" cy="6.5" r="5.1" fill="#1c2414" stroke="#878e94" stroke-width="1.2"/><circle cx="6.5" cy="6.5" r="3.4" fill="url(#led)"/><ellipse cx="6.5" cy="4.6" rx="1.8" ry="0.8" fill="#e0ffb0" opacity="0.7"/></svg>
<div class="a" style="left:220px;top:560px;width:100px;height:48px;background:linear-gradient(180deg,#4e555b 0%,#4a5157 80%,#454c52 100%);border-radius:0 5px 5px 0"></div>
<div class="t" style="left:222.26px;top:562.76px;font-size:13.89px;color:#8a949a;transform:scaleX(0.8355);">Track 8</div>
<div class="a" style="left:234px;top:602px;width:2px;height:2px;background:#30373d"></div>
<div class="a" style="left:238px;top:602px;width:2px;height:2px;background:#30373d"></div>
<div class="a" style="left:242px;top:602px;width:2px;height:2px;background:#30373d"></div>
<svg class="a" style="left:303px;top:592px" width="13" height="13"><circle cx="6.5" cy="6.5" r="5.1" fill="#1c2414" stroke="#878e94" stroke-width="1.2"/><circle cx="6.5" cy="6.5" r="3.4" fill="url(#led)"/><ellipse cx="6.5" cy="4.6" rx="1.8" ry="0.8" fill="#e0ffb0" opacity="0.7"/></svg>
<div class="a" style="left:220px;top:608px;width:100px;height:48px;background:linear-gradient(180deg,#4e555b 0%,#4a5157 80%,#454c52 100%);border-radius:0 5px 5px 0"></div>
<div class="t" style="left:222.26px;top:610.76px;font-size:13.89px;color:#8a949a;transform:scaleX(0.8368);">Track 9</div>
<div class="a" style="left:234px;top:650px;width:2px;height:2px;background:#30373d"></div>
<div class="a" style="left:238px;top:650px;width:2px;height:2px;background:#30373d"></div>
<div class="a" style="left:242px;top:650px;width:2px;height:2px;background:#30373d"></div>
<svg class="a" style="left:303px;top:640px" width="13" height="13"><circle cx="6.5" cy="6.5" r="5.1" fill="#1c2414" stroke="#878e94" stroke-width="1.2"/><circle cx="6.5" cy="6.5" r="3.4" fill="url(#led)"/><ellipse cx="6.5" cy="4.6" rx="1.8" ry="0.8" fill="#e0ffb0" opacity="0.7"/></svg>
<div class="a" style="left:320px;top:223px;width:11px;height:434px;background:#333e47"></div>
<div class="a" style="left:320px;top:223px;width:1px;height:434px;background:#2c353c"></div>
<svg class="a" style="left:312px;top:269px;" width="19" height="5" viewBox="0 0 19 5"><path d="M0 2.5 Q6 2 8 0 L8 5 Q6 3 0 2.5 Z M8 2 H19 V3 H8 Z" fill="#1e272d"/></svg>
<svg class="a" style="left:312px;top:317px;" width="19" height="5" viewBox="0 0 19 5"><path d="M0 2.5 Q6 2 8 0 L8 5 Q6 3 0 2.5 Z M8 2 H19 V3 H8 Z" fill="#1e272d"/></svg>
<svg class="a" style="left:312px;top:365px;" width="19" height="5" viewBox="0 0 19 5"><path d="M0 2.5 Q6 2 8 0 L8 5 Q6 3 0 2.5 Z M8 2 H19 V3 H8 Z" fill="#1e272d"/></svg>
<svg class="a" style="left:312px;top:413px;" width="19" height="5" viewBox="0 0 19 5"><path d="M0 2.5 Q6 2 8 0 L8 5 Q6 3 0 2.5 Z M8 2 H19 V3 H8 Z" fill="#1e272d"/></svg>
<svg class="a" style="left:312px;top:461px;" width="19" height="5" viewBox="0 0 19 5"><path d="M0 2.5 Q6 2 8 0 L8 5 Q6 3 0 2.5 Z M8 2 H19 V3 H8 Z" fill="#1e272d"/></svg>
<svg class="a" style="left:312px;top:509px;" width="19" height="5" viewBox="0 0 19 5"><path d="M0 2.5 Q6 2 8 0 L8 5 Q6 3 0 2.5 Z M8 2 H19 V3 H8 Z" fill="#1e272d"/></svg>
<svg class="a" style="left:312px;top:557px;" width="19" height="5" viewBox="0 0 19 5"><path d="M0 2.5 Q6 2 8 0 L8 5 Q6 3 0 2.5 Z M8 2 H19 V3 H8 Z" fill="#1e272d"/></svg>
<svg class="a" style="left:312px;top:605px;" width="19" height="5" viewBox="0 0 19 5"><path d="M0 2.5 Q6 2 8 0 L8 5 Q6 3 0 2.5 Z M8 2 H19 V3 H8 Z" fill="#1e272d"/></svg>
<div class="a" style="left:330px;top:223px;width:1px;height:434px;background:#1f282e"></div>
<div class="a" style="left:331px;top:166px;width:816px;height:19px;background:#2c343a"></div>
<div class="a" style="left:331px;top:166px;width:19px;height:19px;background:#4d555c;box-shadow:inset 0 0 0 1px #5f676d"></div>
<svg class="a" style="left:335px;top:169px;" width="11" height="13" viewBox="0 0 11 13"><path d="M7.5 2 L3 6.5 L7.5 11" fill="none" stroke="#1d2327" stroke-width="1.2"/></svg>
<div class="a" style="left:351px;top:166px;width:652px;height:19px;background:#4a575e;box-shadow:inset 0 0 0 1px #5a676e"></div>
<div class="a" style="left:353px;top:175px;width:632px;height:1px;background:#93a9b0"></div>
<div class="a" style="left:353px;top:176px;width:632px;height:1px;background:#6c7f86"></div>
<svg class="a" style="left:352px;top:167px;" width="6" height="6" viewBox="0 0 6 6"><path d="M0 0 H5.5 L0 5.5 Z" fill="#f2e290"/></svg>
<svg class="a" style="left:422px;top:167px;" width="6" height="6" viewBox="0 0 6 6"><path d="M0 0 H5.5 L0 5.5 Z" fill="#f2e290"/></svg>
<svg class="a" style="left:493px;top:167px;" width="6" height="6" viewBox="0 0 6 6"><path d="M0 0 H5.5 L0 5.5 Z" fill="#f2e290"/></svg>
<svg class="a" style="left:634px;top:167px;" width="6" height="6" viewBox="0 0 6 6"><path d="M0 0 H5.5 L0 5.5 Z" fill="#f2e290"/></svg>
<svg class="a" style="left:704px;top:167px;" width="6" height="6" viewBox="0 0 6 6"><path d="M0 0 H5.5 L0 5.5 Z" fill="#f2e290"/></svg>
<svg class="a" style="left:845px;top:167px;" width="6" height="6" viewBox="0 0 6 6"><path d="M0 0 H5.5 L0 5.5 Z" fill="#f2e290"/></svg>
<svg class="a" style="left:916px;top:167px;" width="6" height="6" viewBox="0 0 6 6"><path d="M0 0 H5.5 L0 5.5 Z" fill="#f2e290"/></svg>
<div class="a" style="left:1127px;top:166px;width:19px;height:19px;background:#4d555c;box-shadow:inset 0 0 0 1px #5f676d"></div>
<svg class="a" style="left:1131px;top:169px;" width="11" height="13" viewBox="0 0 11 13"><path d="M3.5 2 L8 6.5 L3.5 11" fill="none" stroke="#1d2327" stroke-width="1.2"/></svg>
<div class="a" style="left:1147px;top:166px;width:19px;height:19px;background:#4d555c;box-shadow:inset 0 0 0 1px #5f676d"></div>
<div class="a" style="left:1155px;top:174px;width:3px;height:3px;background:#151a1d"></div>
<div class="a" style="left:331px;top:185px;width:815px;height:38px;background:#1f2a31"></div>
<div class="a" style="left:331px;top:185px;width:815px;height:1px;background:#36414a"></div>
<svg class="a" style="left:332px;top:193px;" width="5" height="10" viewBox="0 0 5 10"><path d="M3 1.2 V9 M3 1.5 L1.2 3" fill="none" stroke="#a9bccb" stroke-width="1.5"/></svg>
<div class="t" style="left:374.56px;top:192.11px;font-size:11.68px;color:#aabdcc;transform:scaleX(0.9884);">5</div>
<div class="t" style="left:419.50px;top:192.11px;font-size:11.68px;color:#aabdcc;transform:scaleX(0.8414);">9</div>
<div class="t" style="left:463.26px;top:192.11px;font-size:11.68px;color:#aabdcc;transform:scaleX(0.8301);">13</div>
<div class="t" style="left:507.25px;top:192.11px;font-size:11.68px;color:#aabdcc;transform:scaleX(0.8385);">17</div>
<div class="t" style="left:551.52px;top:192.11px;font-size:11.68px;color:#aabdcc;transform:scaleX(0.8137);">21</div>
<div class="t" style="left:595.52px;top:192.11px;font-size:11.68px;color:#aabdcc;transform:scaleX(0.8097);">25</div>
<div class="t" style="left:639.52px;top:192.11px;font-size:11.68px;color:#aabdcc;transform:scaleX(0.8137);">29</div>
<div class="t" style="left:683.62px;top:192.11px;font-size:11.68px;color:#aabdcc;transform:scaleX(0.8019);">33</div>
<div class="t" style="left:727.62px;top:192.11px;font-size:11.68px;color:#aabdcc;transform:scaleX(0.8097);">37</div>
<div class="t" style="left:771.81px;top:192.11px;font-size:11.68px;color:#aabdcc;transform:scaleX(0.7904);">41</div>
<div class="t" style="left:815.81px;top:192.11px;font-size:11.68px;color:#aabdcc;transform:scaleX(0.7866);">45</div>
<div class="t" style="left:859.81px;top:192.11px;font-size:11.68px;color:#aabdcc;transform:scaleX(0.7904);">49</div>
<div class="t" style="left:903.62px;top:192.11px;font-size:11.68px;color:#aabdcc;transform:scaleX(0.8019);">53</div>
<div class="t" style="left:947.62px;top:192.11px;font-size:11.68px;color:#aabdcc;transform:scaleX(0.8097);">57</div>
<div class="t" style="left:991.52px;top:192.11px;font-size:11.68px;color:#aabdcc;transform:scaleX(0.8137);">61</div>
<div class="t" style="left:1035.52px;top:192.11px;font-size:11.68px;color:#aabdcc;transform:scaleX(0.8097);">65</div>
<div class="t" style="left:1079.52px;top:192.11px;font-size:11.68px;color:#aabdcc;transform:scaleX(0.8137);">69</div>
<div class="t" style="left:1122.52px;top:192.11px;font-size:11.68px;color:#aabdcc;transform:scaleX(0.8997);">73</div>
<svg class="a" style="left:330px;top:187px;" width="11" height="11" viewBox="0 0 11 11"><path d="M1 1 H9.5 L1 10 Z" fill="#a6d85a"/><path d="M1 1.3 H9" stroke="#d4f090" stroke-width="0.8"/><path d="M0.5 0.5 V10.5" stroke="#2a3a20" stroke-width="1"/></svg>
<svg class="a" style="left:331px;top:205px;" width="40" height="19" viewBox="0 0 40 19"><path d="M0 17 V1.2 H23.5 Q25.5 1.2 26.3 3 L35.5 17 Z" fill="#3a464f"/><path d="M-1 17.5 H36.5" stroke="#46525a" stroke-width="1.1"/></svg>
<div class="t" style="left:331.39px;top:205.67px;font-size:14.45px;color:#e8f0f4;transform:scaleX(0.8510);">Intro</div>
<svg class="a" style="left:419px;top:205px;" width="49" height="19" viewBox="0 0 49 19"><path d="M0 17 V1.2 H32.0 Q34.0 1.2 34.8 3 L44.0 17 Z" fill="#3a464f"/><path d="M-1 17.5 H45.0" stroke="#46525a" stroke-width="1.1"/></svg>
<div class="t" style="left:420.00px;top:206.67px;font-size:14.45px;color:#e8f0f4;transform:scaleX(0.6846);">Chorus</div>
<svg class="a" style="left:507px;top:205px;" width="42" height="19" viewBox="0 0 42 19"><path d="M0 17 V1.2 H25.5 Q27.5 1.2 28.3 3 L37.5 17 Z" fill="#3a464f"/><path d="M-1 17.5 H38.5" stroke="#46525a" stroke-width="1.1"/></svg>
<div class="t" style="left:508.45px;top:205.67px;font-size:14.45px;color:#e8f0f4;transform:scaleX(0.6905);">Verse</div>
<svg class="a" style="left:683px;top:205px;" width="49" height="19" viewBox="0 0 49 19"><path d="M0 17 V1.2 H32.0 Q34.0 1.2 34.8 3 L44.0 17 Z" fill="#3a464f"/><path d="M-1 17.5 H45.0" stroke="#46525a" stroke-width="1.1"/></svg>
<div class="t" style="left:684.00px;top:206.67px;font-size:14.45px;color:#e8f0f4;transform:scaleX(0.6846);">Chorus</div>
<svg class="a" style="left:771px;top:205px;" width="42" height="19" viewBox="0 0 42 19"><path d="M0 17 V1.2 H25.5 Q27.5 1.2 28.3 3 L37.5 17 Z" fill="#3a464f"/><path d="M-1 17.5 H38.5" stroke="#46525a" stroke-width="1.1"/></svg>
<div class="t" style="left:772.45px;top:205.67px;font-size:14.45px;color:#e8f0f4;transform:scaleX(0.6905);">Verse</div>
<svg class="a" style="left:947px;top:205px;" width="49" height="19" viewBox="0 0 49 19"><path d="M0 17 V1.2 H32.0 Q34.0 1.2 34.8 3 L44.0 17 Z" fill="#3a464f"/><path d="M-1 17.5 H45.0" stroke="#46525a" stroke-width="1.1"/></svg>
<div class="t" style="left:948.00px;top:206.67px;font-size:14.45px;color:#e8f0f4;transform:scaleX(0.6846);">Chorus</div>
<svg class="a" style="left:1035px;top:205px;" width="43" height="19" viewBox="0 0 43 19"><path d="M0 17 V1.2 H26.3 Q28.3 1.2 29.1 3 L38.3 17 Z" fill="#3a464f"/><path d="M-1 17.5 H39.3" stroke="#46525a" stroke-width="1.1"/></svg>
<div class="t" style="left:1036.02px;top:205.67px;font-size:14.45px;color:#e8f0f4;transform:scaleX(0.7171);">Outro</div>
<div class="a" style="left:331px;top:223px;width:815px;height:1px;background:#1c2429"></div>
<div class="a" style="left:331px;top:224px;width:815px;height:432px;overflow:hidden;background:#2f3d47">
<div class="a" style="left:0px;top:0;width:11px;height:432px;background:#33434e"></div>
<div class="a" style="left:11px;top:0;width:11px;height:432px;background:#33434e"></div>
<div class="a" style="left:22px;top:0;width:11px;height:432px;background:#33434e"></div>
<div class="a" style="left:33px;top:0;width:11px;height:432px;background:#33434e"></div>
<div class="a" style="left:44px;top:0;width:11px;height:432px;background:#2e3c46"></div>
<div class="a" style="left:55px;top:0;width:11px;height:432px;background:#2e3c46"></div>
<div class="a" style="left:66px;top:0;width:11px;height:432px;background:#2e3c46"></div>
<div class="a" style="left:77px;top:0;width:11px;height:432px;background:#2e3c46"></div>
<div class="a" style="left:88px;top:0;width:11px;height:432px;background:#33434e"></div>
<div class="a" style="left:99px;top:0;width:11px;height:432px;background:#33434e"></div>
<div class="a" style="left:110px;top:0;width:11px;height:432px;background:#33434e"></div>
<div class="a" style="left:121px;top:0;width:11px;height:432px;background:#33434e"></div>
<div class="a" style="left:132px;top:0;width:11px;height:432px;background:#2e3c46"></div>
<div class="a" style="left:143px;top:0;width:11px;height:432px;background:#2e3c46"></div>
<div class="a" style="left:154px;top:0;width:11px;height:432px;background:#2e3c46"></div>
<div class="a" style="left:165px;top:0;width:11px;height:432px;background:#2e3c46"></div>
<div class="a" style="left:176px;top:0;width:11px;height:432px;background:#33434e"></div>
<div class="a" style="left:187px;top:0;width:11px;height:432px;background:#33434e"></div>
<div class="a" style="left:198px;top:0;width:11px;height:432px;background:#33434e"></div>
<div class="a" style="left:209px;top:0;width:11px;height:432px;background:#33434e"></div>
<div class="a" style="left:220px;top:0;width:11px;height:432px;background:#2e3c46"></div>
<div class="a" style="left:231px;top:0;width:11px;height:432px;background:#2e3c46"></div>
<div class="a" style="left:242px;top:0;width:11px;height:432px;background:#2e3c46"></div>
<div class="a" style="left:253px;top:0;width:11px;height:432px;background:#2e3c46"></div>
<div class="a" style="left:264px;top:0;width:11px;height:432px;background:#33434e"></div>
<div class="a" style="left:275px;top:0;width:11px;height:432px;background:#33434e"></div>
<div class="a" style="left:286px;top:0;width:11px;height:432px;background:#33434e"></div>
<div class="a" style="left:297px;top:0;width:11px;height:432px;background:#33434e"></div>
<div class="a" style="left:308px;top:0;width:11px;height:432px;background:#2e3c46"></div>
<div class="a" style="left:319px;top:0;width:11px;height:432px;background:#2e3c46"></div>
<div class="a" style="left:330px;top:0;width:11px;height:432px;background:#2e3c46"></div>
<div class="a" style="left:341px;top:0;width:11px;height:432px;background:#2e3c46"></div>
<div class="a" style="left:352px;top:0;width:11px;height:432px;background:#33434e"></div>
<div class="a" style="left:363px;top:0;width:11px;height:432px;background:#33434e"></div>
<div class="a" style="left:374px;top:0;width:11px;height:432px;background:#33434e"></div>
<div class="a" style="left:385px;top:0;width:11px;height:432px;background:#33434e"></div>
<div class="a" style="left:396px;top:0;width:11px;height:432px;background:#2e3c46"></div>
<div class="a" style="left:407px;top:0;width:11px;height:432px;background:#2e3c46"></div>
<div class="a" style="left:418px;top:0;width:11px;height:432px;background:#2e3c46"></div>
<div class="a" style="left:429px;top:0;width:11px;height:432px;background:#2e3c46"></div>
<div class="a" style="left:440px;top:0;width:11px;height:432px;background:#33434e"></div>
<div class="a" style="left:451px;top:0;width:11px;height:432px;background:#33434e"></div>
<div class="a" style="left:462px;top:0;width:11px;height:432px;background:#33434e"></div>
<div class="a" style="left:473px;top:0;width:11px;height:432px;background:#33434e"></div>
<div class="a" style="left:484px;top:0;width:11px;height:432px;background:#2e3c46"></div>
<div class="a" style="left:495px;top:0;width:11px;height:432px;background:#2e3c46"></div>
<div class="a" style="left:506px;top:0;width:11px;height:432px;background:#2e3c46"></div>
<div class="a" style="left:517px;top:0;width:11px;height:432px;background:#2e3c46"></div>
<div class="a" style="left:528px;top:0;width:11px;height:432px;background:#33434e"></div>
<div class="a" style="left:539px;top:0;width:11px;height:432px;background:#33434e"></div>
<div class="a" style="left:550px;top:0;width:11px;height:432px;background:#33434e"></div>
<div class="a" style="left:561px;top:0;width:11px;height:432px;background:#33434e"></div>
<div class="a" style="left:572px;top:0;width:11px;height:432px;background:#2e3c46"></div>
<div class="a" style="left:583px;top:0;width:11px;height:432px;background:#2e3c46"></div>
<div class="a" style="left:594px;top:0;width:11px;height:432px;background:#2e3c46"></div>
<div class="a" style="left:605px;top:0;width:11px;height:432px;background:#2e3c46"></div>
<div class="a" style="left:616px;top:0;width:11px;height:432px;background:#33434e"></div>
<div class="a" style="left:627px;top:0;width:11px;height:432px;background:#33434e"></div>
<div class="a" style="left:638px;top:0;width:11px;height:432px;background:#33434e"></div>
<div class="a" style="left:649px;top:0;width:11px;height:432px;background:#33434e"></div>
<div class="a" style="left:660px;top:0;width:11px;height:432px;background:#2e3c46"></div>
<div class="a" style="left:671px;top:0;width:11px;height:432px;background:#2e3c46"></div>
<div class="a" style="left:682px;top:0;width:11px;height:432px;background:#2e3c46"></div>
<div class="a" style="left:693px;top:0;width:11px;height:432px;background:#2e3c46"></div>
<div class="a" style="left:704px;top:0;width:11px;height:432px;background:#33434e"></div>
<div class="a" style="left:715px;top:0;width:11px;height:432px;background:#33434e"></div>
<div class="a" style="left:726px;top:0;width:11px;height:432px;background:#33434e"></div>
<div class="a" style="left:737px;top:0;width:11px;height:432px;background:#33434e"></div>
<div class="a" style="left:748px;top:0;width:11px;height:432px;background:#2e3c46"></div>
<div class="a" style="left:759px;top:0;width:11px;height:432px;background:#2e3c46"></div>
<div class="a" style="left:770px;top:0;width:11px;height:432px;background:#2e3c46"></div>
<div class="a" style="left:781px;top:0;width:11px;height:432px;background:#2e3c46"></div>
<div class="a" style="left:792px;top:0;width:11px;height:432px;background:#33434e"></div>
<div class="a" style="left:803px;top:0;width:11px;height:432px;background:#33434e"></div>
<div class="a" style="left:814px;top:0;width:11px;height:432px;background:#33434e"></div>
<div class="a" style="left:825px;top:0;width:11px;height:432px;background:#33434e"></div>
<div class="a" style="left:0px;top:0;width:1px;height:432px;background:#131c23"></div>
<div class="a" style="left:11px;top:0;width:1px;height:432px;background:#131c23"></div>
<div class="a" style="left:22px;top:0;width:1px;height:432px;background:#131c23"></div>
<div class="a" style="left:33px;top:0;width:1px;height:432px;background:#131c23"></div>
<div class="a" style="left:44px;top:0;width:1px;height:432px;background:#131c23"></div>
<div class="a" style="left:55px;top:0;width:1px;height:432px;background:#131c23"></div>
<div class="a" style="left:66px;top:0;width:1px;height:432px;background:#131c23"></div>
<div class="a" style="left:77px;top:0;width:1px;height:432px;background:#131c23"></div>
<div class="a" style="left:88px;top:0;width:1px;height:432px;background:#131c23"></div>
<div class="a" style="left:99px;top:0;width:1px;height:432px;background:#131c23"></div>
<div class="a" style="left:110px;top:0;width:1px;height:432px;background:#131c23"></div>
<div class="a" style="left:121px;top:0;width:1px;height:432px;background:#131c23"></div>
<div class="a" style="left:132px;top:0;width:1px;height:432px;background:#131c23"></div>
<div class="a" style="left:143px;top:0;width:1px;height:432px;background:#131c23"></div>
<div class="a" style="left:154px;top:0;width:1px;height:432px;background:#131c23"></div>
<div class="a" style="left:165px;top:0;width:1px;height:432px;background:#131c23"></div>
<div class="a" style="left:176px;top:0;width:1px;height:432px;background:#131c23"></div>
<div class="a" style="left:187px;top:0;width:1px;height:432px;background:#131c23"></div>
<div class="a" style="left:198px;top:0;width:1px;height:432px;background:#131c23"></div>
<div class="a" style="left:209px;top:0;width:1px;height:432px;background:#131c23"></div>
<div class="a" style="left:220px;top:0;width:1px;height:432px;background:#131c23"></div>
<div class="a" style="left:231px;top:0;width:1px;height:432px;background:#131c23"></div>
<div class="a" style="left:242px;top:0;width:1px;height:432px;background:#131c23"></div>
<div class="a" style="left:253px;top:0;width:1px;height:432px;background:#131c23"></div>
<div class="a" style="left:264px;top:0;width:1px;height:432px;background:#131c23"></div>
<div class="a" style="left:275px;top:0;width:1px;height:432px;background:#131c23"></div>
<div class="a" style="left:286px;top:0;width:1px;height:432px;background:#131c23"></div>
<div class="a" style="left:297px;top:0;width:1px;height:432px;background:#131c23"></div>
<div class="a" style="left:308px;top:0;width:1px;height:432px;background:#131c23"></div>
<div class="a" style="left:319px;top:0;width:1px;height:432px;background:#131c23"></div>
<div class="a" style="left:330px;top:0;width:1px;height:432px;background:#131c23"></div>
<div class="a" style="left:341px;top:0;width:1px;height:432px;background:#131c23"></div>
<div class="a" style="left:352px;top:0;width:1px;height:432px;background:#131c23"></div>
<div class="a" style="left:363px;top:0;width:1px;height:432px;background:#131c23"></div>
<div class="a" style="left:374px;top:0;width:1px;height:432px;background:#131c23"></div>
<div class="a" style="left:385px;top:0;width:1px;height:432px;background:#131c23"></div>
<div class="a" style="left:396px;top:0;width:1px;height:432px;background:#131c23"></div>
<div class="a" style="left:407px;top:0;width:1px;height:432px;background:#131c23"></div>
<div class="a" style="left:418px;top:0;width:1px;height:432px;background:#131c23"></div>
<div class="a" style="left:429px;top:0;width:1px;height:432px;background:#131c23"></div>
<div class="a" style="left:440px;top:0;width:1px;height:432px;background:#131c23"></div>
<div class="a" style="left:451px;top:0;width:1px;height:432px;background:#131c23"></div>
<div class="a" style="left:462px;top:0;width:1px;height:432px;background:#131c23"></div>
<div class="a" style="left:473px;top:0;width:1px;height:432px;background:#131c23"></div>
<div class="a" style="left:484px;top:0;width:1px;height:432px;background:#131c23"></div>
<div class="a" style="left:495px;top:0;width:1px;height:432px;background:#131c23"></div>
<div class="a" style="left:506px;top:0;width:1px;height:432px;background:#131c23"></div>
<div class="a" style="left:517px;top:0;width:1px;height:432px;background:#131c23"></div>
<div class="a" style="left:528px;top:0;width:1px;height:432px;background:#131c23"></div>
<div class="a" style="left:539px;top:0;width:1px;height:432px;background:#131c23"></div>
<div class="a" style="left:550px;top:0;width:1px;height:432px;background:#131c23"></div>
<div class="a" style="left:561px;top:0;width:1px;height:432px;background:#131c23"></div>
<div class="a" style="left:572px;top:0;width:1px;height:432px;background:#131c23"></div>
<div class="a" style="left:583px;top:0;width:1px;height:432px;background:#131c23"></div>
<div class="a" style="left:594px;top:0;width:1px;height:432px;background:#131c23"></div>
<div class="a" style="left:605px;top:0;width:1px;height:432px;background:#131c23"></div>
<div class="a" style="left:616px;top:0;width:1px;height:432px;background:#131c23"></div>
<div class="a" style="left:627px;top:0;width:1px;height:432px;background:#131c23"></div>
<div class="a" style="left:638px;top:0;width:1px;height:432px;background:#131c23"></div>
<div class="a" style="left:649px;top:0;width:1px;height:432px;background:#131c23"></div>
<div class="a" style="left:660px;top:0;width:1px;height:432px;background:#131c23"></div>
<div class="a" style="left:671px;top:0;width:1px;height:432px;background:#131c23"></div>
<div class="a" style="left:682px;top:0;width:1px;height:432px;background:#131c23"></div>
<div class="a" style="left:693px;top:0;width:1px;height:432px;background:#131c23"></div>
<div class="a" style="left:704px;top:0;width:1px;height:432px;background:#131c23"></div>
<div class="a" style="left:715px;top:0;width:1px;height:432px;background:#131c23"></div>
<div class="a" style="left:726px;top:0;width:1px;height:432px;background:#131c23"></div>
<div class="a" style="left:737px;top:0;width:1px;height:432px;background:#131c23"></div>
<div class="a" style="left:748px;top:0;width:1px;height:432px;background:#131c23"></div>
<div class="a" style="left:759px;top:0;width:1px;height:432px;background:#131c23"></div>
<div class="a" style="left:770px;top:0;width:1px;height:432px;background:#131c23"></div>
<div class="a" style="left:781px;top:0;width:1px;height:432px;background:#131c23"></div>
<div class="a" style="left:792px;top:0;width:1px;height:432px;background:#131c23"></div>
<div class="a" style="left:803px;top:0;width:1px;height:432px;background:#131c23"></div>
<div class="a" style="left:814px;top:0;width:1px;height:432px;background:#131c23"></div>
<div class="a" style="left:825px;top:0;width:1px;height:432px;background:#131c23"></div>
<div class="a" style="left:0;top:47px;width:815px;height:1px;background:#131c23;box-shadow:0 1px 0 rgba(20,28,34,0.35)"></div>
<div class="a" style="left:0;top:95px;width:815px;height:1px;background:#131c23;box-shadow:0 1px 0 rgba(20,28,34,0.35)"></div>
<div class="a" style="left:0;top:143px;width:815px;height:1px;background:#131c23;box-shadow:0 1px 0 rgba(20,28,34,0.35)"></div>
<div class="a" style="left:0;top:191px;width:815px;height:1px;background:#131c23;box-shadow:0 1px 0 rgba(20,28,34,0.35)"></div>
<div class="a" style="left:0;top:239px;width:815px;height:1px;background:#131c23;box-shadow:0 1px 0 rgba(20,28,34,0.35)"></div>
<div class="a" style="left:0;top:287px;width:815px;height:1px;background:#131c23;box-shadow:0 1px 0 rgba(20,28,34,0.35)"></div>
<div class="a" style="left:0;top:335px;width:815px;height:1px;background:#131c23;box-shadow:0 1px 0 rgba(20,28,34,0.35)"></div>
<div class="a" style="left:0;top:383px;width:815px;height:1px;background:#131c23;box-shadow:0 1px 0 rgba(20,28,34,0.35)"></div>
<div class="a" style="left:0;top:431px;width:815px;height:1px;background:#131c23;box-shadow:0 1px 0 rgba(20,28,34,0.35)"></div>
</div>
<div class="a" style="left:331px;top:224px;width:792px;height:47px;overflow:hidden;border-radius:3px 3px 0 0">
<div class="a" style="left:0;top:0;width:792px;height:14px;background:rgba(54,69,79,0.86)"></div>
<div class="a" style="left:0;top:14px;width:792px;height:33px;background:rgba(20,30,38,0.18)"></div>
<svg class="a" style="left:0;top:0" width="792" height="47"><polygon points="0,22.2 1,22.2 1,22.5 2,22.5 2,22.6 3,22.6 3,24.7 4,24.7 4,20.0 5,20.0 5,22.3 6,22.3 6,25.4 7,25.4 7,18.0 8,18.0 8,17.5 9,17.5 9,16.7 10,16.7 10,22.2 11,22.2 11,21.8 12,21.8 12,22.1 13,22.1 13,25.2 14,25.2 14,26.7 15,26.7 15,24.4 16,24.4 16,24.1 17,24.1 17,24.6 18,24.6 18,24.0 19,24.0 19,23.6 20,23.6 20,24.8 21,24.8 21,24.7 22,24.7 22,22.5 23,22.5 23,25.4 24,25.4 24,24.6 25,24.6 25,23.9 26,23.9 26,22.1 27,22.1 27,21.8 28,21.8 28,22.0 29,22.0 29,18.2 30,18.2 30,18.2 31,18.2 31,20.9 32,20.9 32,21.5 33,21.5 33,23.7 34,23.7 34,24.8 35,24.8 35,22.8 36,22.8 36,23.0 37,23.0 37,23.8 38,23.8 38,24.6 39,24.6 39,24.3 40,24.3 40,24.0 41,24.0 41,23.2 42,23.2 42,25.8 43,25.8 43,26.4 44,26.4 44,26.2 45,26.2 45,19.3 46,19.3 46,18.6 47,18.6 47,22.9 48,22.9 48,24.1 49,24.1 49,24.7 50,24.7 50,21.9 51,21.9 51,24.0 52,24.0 52,24.8 53,24.8 53,18.7 54,18.7 54,18.7 55,18.7 55,22.1 56,22.1 56,24.6 57,24.6 57,25.5 58,25.5 58,25.7 59,25.7 59,25.2 60,25.2 60,18.0 61,18.0 61,21.5 62,21.5 62,23.3 63,23.3 63,24.6 64,24.6 64,26.1 65,26.1 65,26.2 66,26.2 66,26.9 67,26.9 67,22.8 68,22.8 68,18.5 69,18.5 69,18.4 70,18.4 70,20.2 71,20.2 71,22.3 72,22.3 72,18.0 73,18.0 73,19.1 74,19.1 74,17.5 75,17.5 75,17.6 76,17.6 76,17.4 77,17.4 77,19.2 78,19.2 78,19.0 79,19.0 79,22.6 80,22.6 80,18.8 81,18.8 81,16.2 82,16.2 82,16.2 83,16.2 83,16.2 84,16.2 84,16.2 85,16.2 85,16.2 86,16.2 86,16.2 87,16.2 87,16.2 88,16.2 88,16.2 89,16.2 89,16.2 90,16.2 90,16.2 91,16.2 91,16.2 92,16.2 92,16.2 93,16.2 93,16.2 94,16.2 94,16.2 95,16.2 95,16.2 96,16.2 96,16.2 97,16.2 97,16.2 98,16.2 98,16.2 99,16.2 99,16.2 100,16.2 100,16.2 101,16.2 101,16.2 102,16.2 102,16.2 103,16.2 103,16.2 104,16.2 104,16.2 105,16.2 105,16.2 106,16.2 106,16.2 107,16.2 107,16.2 108,16.2 108,16.2 109,16.2 109,16.2 110,16.2 110,16.2 111,16.2 111,16.2 112,16.2 112,19.1 113,19.1 113,16.2 114,16.2 114,16.2 115,16.2 115,16.2 116,16.2 116,16.2 117,16.2 117,16.2 118,16.2 118,16.2 119,16.2 119,16.2 120,16.2 120,16.2 121,16.2 121,16.2 122,16.2 122,16.2 123,16.2 123,16.2 124,16.2 124,16.2 125,16.2 125,16.2 126,16.2 126,16.2 127,16.2 127,16.2 128,16.2 128,16.2 129,16.2 129,16.2 130,16.2 130,16.2 131,16.2 131,16.2 132,16.2 132,16.2 133,16.2 133,16.2 134,16.2 134,20.4 135,20.4 135,16.2 136,16.2 136,16.2 137,16.2 137,16.2 138,16.2 138,16.2 139,16.2 139,16.2 140,16.2 140,16.2 141,16.2 141,16.2 142,16.2 142,16.2 143,16.2 143,16.2 144,16.2 144,16.2 145,16.2 145,21.0 146,21.0 146,16.2 147,16.2 147,16.2 148,16.2 148,16.2 149,16.2 149,16.2 150,16.2 150,16.2 151,16.2 151,16.2 152,16.2 152,16.2 153,16.2 153,16.2 154,16.2 154,16.2 155,16.2 155,16.2 156,16.2 156,16.2 157,16.2 157,18.7 158,18.7 158,21.3 159,21.3 159,18.7 160,18.7 160,16.2 161,16.2 161,20.3 162,20.3 162,16.2 163,16.2 163,16.2 164,16.2 164,16.2 165,16.2 165,16.2 166,16.2 166,16.2 167,16.2 167,16.2 168,16.2 168,16.2 169,16.2 169,16.2 170,16.2 170,16.2 171,16.2 171,16.2 172,16.2 172,16.2 173,16.2 173,16.2 174,16.2 174,22.1 175,22.1 175,16.2 176,16.2 176,16.2 177,16.2 177,16.2 178,16.2 178,16.2 179,16.2 179,16.2 180,16.2 180,16.2 181,16.2 181,16.2 182,16.2 182,16.2 183,16.2 183,16.2 184,16.2 184,16.2 185,16.2 185,16.2 186,16.2 186,16.2 187,16.2 187,16.2 188,16.2 188,16.2 189,16.2 189,16.2 190,16.2 190,16.2 191,16.2 191,16.2 192,16.2 192,16.2 193,16.2 193,16.2 194,16.2 194,16.2 195,16.2 195,16.2 196,16.2 196,16.2 197,16.2 197,16.2 198,16.2 198,16.2 199,16.2 199,16.2 200,16.2 200,16.2 201,16.2 201,16.2 202,16.2 202,16.2 203,16.2 203,16.2 204,16.2 204,16.2 205,16.2 205,16.2 206,16.2 206,16.2 207,16.2 207,16.2 208,16.2 208,16.2 209,16.2 209,16.2 210,16.2 210,16.2 211,16.2 211,16.2 212,16.2 212,16.2 213,16.2 213,16.2 214,16.2 214,16.2 215,16.2 215,16.2 216,16.2 216,16.2 217,16.2 217,16.2 218,16.2 218,16.2 219,16.2 219,16.2 220,16.2 220,16.2 221,16.2 221,16.2 222,16.2 222,16.2 223,16.2 223,16.2 224,16.2 224,16.2 225,16.2 225,16.2 226,16.2 226,16.2 227,16.2 227,16.2 228,16.2 228,16.2 229,16.2 229,16.2 230,16.2 230,16.2 231,16.2 231,16.2 232,16.2 232,16.2 233,16.2 233,16.2 234,16.2 234,16.2 235,16.2 235,16.2 236,16.2 236,16.2 237,16.2 237,16.2 238,16.2 238,16.2 239,16.2 239,16.2 240,16.2 240,16.2 241,16.2 241,16.2 242,16.2 242,16.2 243,16.2 243,16.2 244,16.2 244,16.2 245,16.2 245,16.2 246,16.2 246,16.2 247,16.2 247,16.2 248,16.2 248,16.2 249,16.2 249,16.2 250,16.2 250,16.2 251,16.2 251,16.2 252,16.2 252,16.2 253,16.2 253,16.2 254,16.2 254,16.2 255,16.2 255,16.2 256,16.2 256,16.2 257,16.2 257,16.2 258,16.2 258,16.2 259,16.2 259,16.2 260,16.2 260,16.2 261,16.2 261,16.2 262,16.2 262,16.2 263,16.2 263,16.2 264,16.2 264,16.2 265,16.2 265,16.2 266,16.2 266,16.2 267,16.2 267,16.2 268,16.2 268,16.2 269,16.2 269,16.2 270,16.2 270,16.2 271,16.2 271,16.2 272,16.2 272,16.2 273,16.2 273,16.2 274,16.2 274,16.2 275,16.2 275,16.2 276,16.2 276,16.2 277,16.2 277,16.2 278,16.2 278,20.4 279,20.4 279,16.2 280,16.2 280,16.2 281,16.2 281,20.3 282,20.3 282,17.5 283,17.5 283,18.8 284,18.8 284,17.5 285,17.5 285,17.2 286,17.2 286,18.3 287,18.3 287,17.2 288,17.2 288,16.2 289,16.2 289,16.2 290,16.2 290,16.2 291,16.2 291,16.2 292,16.2 292,16.2 293,16.2 293,16.2 294,16.2 294,16.2 295,16.2 295,16.2 296,16.2 296,16.2 297,16.2 297,16.2 298,16.2 298,16.2 299,16.2 299,16.2 300,16.2 300,21.5 301,21.5 301,16.2 302,16.2 302,16.2 303,16.2 303,18.9 304,18.9 304,16.2 305,16.2 305,16.2 306,16.2 306,16.2 307,16.2 307,16.2 308,16.2 308,16.2 309,16.2 309,16.2 310,16.2 310,16.2 311,16.2 311,16.2 312,16.2 312,16.2 313,16.2 313,18.3 314,18.3 314,16.2 315,16.2 315,21.3 316,21.3 316,16.2 317,16.2 317,16.2 318,16.2 318,16.2 319,16.2 319,16.2 320,16.2 320,16.2 321,16.2 321,16.2 322,16.2 322,16.2 323,16.2 323,16.2 324,16.2 324,16.2 325,16.2 325,16.2 326,16.2 326,16.2 327,16.2 327,16.2 328,16.2 328,16.2 329,16.2 329,16.2 330,16.2 330,16.2 331,16.2 331,16.2 332,16.2 332,16.2 333,16.2 333,16.2 334,16.2 334,16.2 335,16.2 335,16.2 336,16.2 336,16.2 337,16.2 337,16.2 338,16.2 338,19.2 339,19.2 339,16.2 340,16.2 340,16.2 341,16.2 341,16.2 342,16.2 342,16.2 343,16.2 343,16.2 344,16.2 344,16.2 345,16.2 345,16.2 346,16.2 346,19.8 347,19.8 347,16.2 348,16.2 348,16.2 349,16.2 349,16.2 350,16.2 350,18.1 351,18.1 351,20.0 352,20.0 352,18.1 353,18.1 353,16.2 354,16.2 354,16.2 355,16.2 355,16.2 356,16.2 356,16.2 357,16.2 357,16.2 358,16.2 358,16.2 359,16.2 359,16.2 360,16.2 360,16.2 361,16.2 361,16.2 362,16.2 362,16.2 363,16.2 363,16.2 364,16.2 364,16.2 365,16.2 365,16.2 366,16.2 366,16.2 367,16.2 367,16.2 368,16.2 368,16.2 369,16.2 369,16.2 370,16.2 370,16.2 371,16.2 371,16.2 372,16.2 372,16.2 373,16.2 373,16.2 374,16.2 374,16.2 375,16.2 375,16.2 376,16.2 376,16.2 377,16.2 377,16.2 378,16.2 378,16.2 379,16.2 379,16.2 380,16.2 380,22.1 381,22.1 381,16.2 382,16.2 382,16.2 383,16.2 383,16.2 384,16.2 384,16.2 385,16.2 385,16.2 386,16.2 386,18.5 387,18.5 387,16.2 388,16.2 388,16.2 389,16.2 389,16.2 390,16.2 390,20.5 391,20.5 391,16.2 392,16.2 392,16.2 393,16.2 393,16.2 394,16.2 394,16.2 395,16.2 395,16.2 396,16.2 396,16.2 397,16.2 397,16.2 398,16.2 398,16.2 399,16.2 399,21.7 400,21.7 400,16.2 401,16.2 401,16.2 402,16.2 402,16.2 403,16.2 403,22.0 404,22.0 404,16.2 405,16.2 405,16.2 406,16.2 406,16.2 407,16.2 407,16.2 408,16.2 408,16.2 409,16.2 409,16.2 410,16.2 410,16.2 411,16.2 411,16.2 412,16.2 412,16.2 413,16.2 413,16.2 414,16.2 414,16.2 415,16.2 415,16.2 416,16.2 416,16.2 417,16.2 417,16.2 418,16.2 418,16.2 419,16.2 419,16.2 420,16.2 420,16.2 421,16.2 421,16.2 422,16.2 422,16.2 423,16.2 423,16.2 424,16.2 424,16.2 425,16.2 425,16.2 426,16.2 426,16.2 427,16.2 427,16.2 428,16.2 428,16.2 429,16.2 429,16.2 430,16.2 430,16.2 431,16.2 431,16.2 432,16.2 432,16.2 433,16.2 433,16.2 434,16.2 434,21.4 435,21.4 435,20.3 436,20.3 436,16.2 437,16.2 437,16.2 438,16.2 438,16.2 439,16.2 439,16.2 440,16.2 440,16.2 441,16.2 441,16.2 442,16.2 442,16.2 443,16.2 443,16.2 444,16.2 444,16.2 445,16.2 445,16.2 446,16.2 446,16.2 447,16.2 447,16.2 448,16.2 448,16.2 449,16.2 449,19.9 450,19.9 450,16.2 451,16.2 451,16.2 452,16.2 452,16.2 453,16.2 453,16.2 454,16.2 454,16.2 455,16.2 455,16.2 456,16.2 456,16.2 457,16.2 457,16.2 458,16.2 458,16.2 459,16.2 459,16.2 460,16.2 460,16.2 461,16.2 461,16.2 462,16.2 462,16.2 463,16.2 463,16.2 464,16.2 464,16.2 465,16.2 465,16.2 466,16.2 466,16.2 467,16.2 467,16.2 468,16.2 468,20.0 469,20.0 469,16.2 470,16.2 470,16.2 471,16.2 471,16.2 472,16.2 472,16.2 473,16.2 473,16.2 474,16.2 474,16.2 475,16.2 475,16.2 476,16.2 476,16.2 477,16.2 477,16.2 478,16.2 478,16.2 479,16.2 479,16.2 480,16.2 480,16.2 481,16.2 481,16.2 482,16.2 482,18.8 483,18.8 483,16.2 484,16.2 484,16.2 485,16.2 485,16.2 486,16.2 486,16.2 487,16.2 487,16.2 488,16.2 488,16.2 489,16.2 489,16.2 490,16.2 490,16.2 491,16.2 491,16.2 492,16.2 492,16.2 493,16.2 493,16.2 494,16.2 494,20.1 495,20.1 495,16.2 496,16.2 496,16.2 497,16.2 497,16.2 498,16.2 498,16.2 499,16.2 499,16.2 500,16.2 500,16.2 501,16.2 501,16.2 502,16.2 502,16.2 503,16.2 503,16.2 504,16.2 504,16.2 505,16.2 505,16.2 506,16.2 506,16.2 507,16.2 507,16.2 508,16.2 508,16.2 509,16.2 509,16.2 510,16.2 510,16.2 511,16.2 511,16.2 512,16.2 512,16.2 513,16.2 513,16.2 514,16.2 514,16.2 515,16.2 515,16.2 516,16.2 516,16.2 517,16.2 517,16.2 518,16.2 518,16.2 519,16.2 519,16.2 520,16.2 520,16.2 521,16.2 521,16.2 522,16.2 522,16.2 523,16.2 523,16.2 524,16.2 524,16.2 525,16.2 525,16.2 526,16.2 526,16.2 527,16.2 527,16.2 528,16.2 528,16.2 529,16.2 529,16.2 530,16.2 530,16.2 531,16.2 531,16.2 532,16.2 532,20.0 533,20.0 533,16.2 534,16.2 534,16.2 535,16.2 535,16.2 536,16.2 536,19.7 537,19.7 537,16.2 538,16.2 538,16.2 539,16.2 539,16.2 540,16.2 540,16.2 541,16.2 541,16.2 542,16.2 542,16.2 543,16.2 543,16.2 544,16.2 544,16.2 545,16.2 545,20.9 546,20.9 546,16.2 547,16.2 547,16.2 548,16.2 548,16.2 549,16.2 549,16.2 550,16.2 550,17.4 551,17.4 551,18.7 552,18.7 552,17.4 553,17.4 553,16.2 554,16.2 554,20.2 555,20.2 555,16.2 556,16.2 556,16.2 557,16.2 557,16.2 558,16.2 558,21.0 559,21.0 559,16.2 560,16.2 560,16.2 561,16.2 561,16.2 562,16.2 562,16.2 563,16.2 563,16.2 564,16.2 564,16.2 565,16.2 565,16.2 566,16.2 566,16.2 567,16.2 567,16.2 568,16.2 568,18.7 569,18.7 569,21.2 570,21.2 570,18.7 571,18.7 571,17.5 572,17.5 572,18.8 573,18.8 573,17.5 574,17.5 574,16.2 575,16.2 575,16.2 576,16.2 576,16.2 577,16.2 577,16.2 578,16.2 578,16.2 579,16.2 579,16.2 580,16.2 580,16.2 581,16.2 581,16.2 582,16.2 582,16.2 583,16.2 583,16.2 584,16.2 584,16.2 585,16.2 585,16.2 586,16.2 586,16.2 587,16.2 587,16.2 588,16.2 588,16.2 589,16.2 589,16.2 590,16.2 590,16.2 591,16.2 591,16.2 592,16.2 592,16.2 593,16.2 593,16.2 594,16.2 594,16.2 595,16.2 595,18.3 596,18.3 596,16.2 597,16.2 597,16.2 598,16.2 598,16.2 599,16.2 599,16.2 600,16.2 600,16.2 601,16.2 601,21.9 602,21.9 602,16.2 603,16.2 603,16.2 604,16.2 604,16.2 605,16.2 605,16.2 606,16.2 606,16.2 607,16.2 607,16.2 608,16.2 608,16.2 609,16.2 609,16.2 610,16.2 610,16.2 611,16.2 611,16.2 612,16.2 612,16.2 613,16.2 613,16.2 614,16.2 614,16.2 615,16.2 615,16.2 616,16.2 616,16.2 617,16.2 617,16.2 618,16.2 618,16.2 619,16.2 619,16.2 620,16.2 620,16.2 621,16.2 621,16.2 622,16.2 622,16.2 623,16.2 623,16.2 624,16.2 624,16.2 625,16.2 625,16.2 626,16.2 626,16.2 627,16.2 627,16.2 628,16.2 628,16.2 629,16.2 629,16.2 630,16.2 630,16.2 631,16.2 631,16.2 632,16.2 632,16.2 633,16.2 633,16.2 634,16.2 634,16.2 635,16.2 635,19.9 636,19.9 636,16.2 637,16.2 637,16.2 638,16.2 638,16.2 639,16.2 639,16.2 640,16.2 640,16.2 641,16.2 641,16.2 642,16.2 642,16.2 643,16.2 643,22.2 644,22.2 644,16.2 645,16.2 645,16.2 646,16.2 646,16.2 647,16.2 647,16.2 648,16.2 648,16.2 649,16.2 649,16.2 650,16.2 650,18.7 651,18.7 651,16.2 652,16.2 652,16.2 653,16.2 653,16.2 654,16.2 654,20.3 655,20.3 655,19.4 656,19.4 656,16.2 657,16.2 657,16.2 658,16.2 658,16.2 659,16.2 659,16.2 660,16.2 660,16.2 661,16.2 661,16.2 662,16.2 662,16.2 663,16.2 663,16.2 664,16.2 664,16.2 665,16.2 665,16.2 666,16.2 666,16.2 667,16.2 667,16.2 668,16.2 668,17.7 669,17.7 669,19.2 670,19.2 670,17.7 671,17.7 671,16.2 672,16.2 672,16.2 673,16.2 673,18.7 674,18.7 674,16.2 675,16.2 675,16.2 676,16.2 676,16.2 677,16.2 677,16.2 678,16.2 678,16.2 679,16.2 679,16.2 680,16.2 680,16.2 681,16.2 681,16.2 682,16.2 682,16.2 683,16.2 683,16.2 684,16.2 684,16.2 685,16.2 685,16.2 686,16.2 686,16.2 687,16.2 687,16.2 688,16.2 688,16.2 689,16.2 689,16.2 690,16.2 690,16.2 691,16.2 691,16.2 692,16.2 692,16.2 693,16.2 693,17.8 694,17.8 694,19.3 695,19.3 695,17.8 696,17.8 696,16.2 697,16.2 697,16.2 698,16.2 698,16.2 699,16.2 699,16.2 700,16.2 700,16.2 701,16.2 701,21.1 702,21.1 702,21.3 703,21.3 703,18.8 704,18.8 704,16.2 705,16.2 705,18.7 706,18.7 706,16.2 707,16.2 707,19.5 708,19.5 708,21.7 709,21.7 709,16.2 710,16.2 710,18.8 711,18.8 711,16.2 712,16.2 712,16.2 713,16.2 713,16.2 714,16.2 714,16.2 715,16.2 715,16.2 716,16.2 716,16.2 717,16.2 717,16.2 718,16.2 718,16.2 719,16.2 719,16.2 720,16.2 720,16.2 721,16.2 721,16.2 722,16.2 722,16.2 723,16.2 723,16.2 724,16.2 724,16.2 725,16.2 725,19.8 726,19.8 726,16.2 727,16.2 727,16.2 728,16.2 728,16.2 729,16.2 729,16.2 730,16.2 730,17.4 731,17.4 731,18.6 732,18.6 732,17.4 733,17.4 733,16.2 734,16.2 734,16.2 735,16.2 735,16.2 736,16.2 736,16.2 737,16.2 737,19.1 738,19.1 738,22.0 739,22.0 739,19.3 740,19.3 740,17.8 741,17.8 741,16.2 742,16.2 742,16.2 743,16.2 743,21.2 744,21.2 744,16.2 745,16.2 745,16.2 746,16.2 746,16.2 747,16.2 747,16.2 748,16.2 748,16.2 749,16.2 749,16.2 750,16.2 750,16.2 751,16.2 751,16.2 752,16.2 752,16.2 753,16.2 753,16.2 754,16.2 754,18.9 755,18.9 755,16.2 756,16.2 756,16.2 757,16.2 757,16.2 758,16.2 758,18.6 759,18.6 759,21.1 760,21.1 760,18.6 761,18.6 761,16.2 762,16.2 762,16.2 763,16.2 763,16.2 764,16.2 764,16.2 765,16.2 765,20.9 766,20.9 766,16.2 767,16.2 767,16.2 768,16.2 768,16.2 769,16.2 769,22.2 770,22.2 770,16.2 771,16.2 771,16.2 772,16.2 772,16.2 773,16.2 773,16.2 774,16.2 774,17.6 775,17.6 775,19.0 776,19.0 776,17.6 777,17.6 777,16.2 778,16.2 778,16.2 779,16.2 779,16.2 780,16.2 780,16.2 781,16.2 781,16.2 782,16.2 782,16.2 783,16.2 783,18.7 784,18.7 784,21.3 785,21.3 785,18.7 786,18.7 786,16.2 787,16.2 787,17.6 788,17.6 788,19.0 789,19.0 789,18.6 790,18.6 790,19.8 791,19.8 791,21.0 792,21.0 792,41.4 791,41.4 791,42.6 790,42.6 790,40.2 789,40.2 789,42.9 788,42.9 788,45.7 787,45.7 787,45.7 786,45.7 786,45.7 785,45.7 785,42.4 784,42.4 784,42.8 783,42.8 783,45.7 782,45.7 782,43.2 781,43.2 781,45.7 780,45.7 780,45.7 779,45.7 779,40.5 778,40.5 778,41.5 777,41.5 777,43.0 776,43.0 776,40.3 775,40.3 775,43.0 774,43.0 774,45.7 773,45.7 773,45.7 772,45.7 772,45.7 771,45.7 771,45.7 770,45.7 770,45.7 769,45.7 769,45.7 768,45.7 768,45.7 767,45.7 767,40.1 766,40.1 766,45.7 765,45.7 765,45.7 764,45.7 764,45.7 763,45.7 763,45.7 762,45.7 762,43.4 761,43.4 761,41.0 760,41.0 760,43.4 759,43.4 759,45.7 758,45.7 758,45.7 757,45.7 757,45.7 756,45.7 756,45.7 755,45.7 755,45.7 754,45.7 754,45.7 753,45.7 753,45.7 752,45.7 752,45.7 751,45.7 751,45.7 750,45.7 750,45.7 749,45.7 749,45.7 748,45.7 748,45.7 747,45.7 747,45.7 746,45.7 746,45.7 745,45.7 745,45.7 744,45.7 744,45.7 743,45.7 743,45.7 742,45.7 742,40.7 741,40.7 741,45.7 740,45.7 740,44.4 739,44.4 739,43.2 738,43.2 738,42.8 737,42.8 737,39.9 736,39.9 736,42.8 735,42.8 735,45.7 734,45.7 734,45.7 733,45.7 733,43.9 732,43.9 732,42.1 731,42.1 731,43.9 730,43.9 730,45.7 729,45.7 729,42.6 728,42.6 728,45.7 727,45.7 727,45.7 726,45.7 726,40.4 725,40.4 725,43.5 724,43.5 724,41.4 723,41.4 723,41.6 722,41.6 722,43.6 721,43.6 721,45.7 720,45.7 720,45.7 719,45.7 719,45.7 718,45.7 718,45.7 717,45.7 717,42.0 716,42.0 716,45.7 715,45.7 715,45.7 714,45.7 714,45.7 713,45.7 713,45.7 712,45.7 712,45.7 711,45.7 711,45.7 710,45.7 710,41.7 709,41.7 709,45.7 708,45.7 708,45.7 707,45.7 707,45.7 706,45.7 706,45.7 705,45.7 705,39.7 704,39.7 704,45.7 703,45.7 703,45.7 702,45.7 702,45.7 701,45.7 701,45.7 700,45.7 700,45.7 699,45.7 699,45.7 698,45.7 698,45.7 697,45.7 697,45.7 696,45.7 696,45.7 695,45.7 695,45.7 694,45.7 694,45.7 693,45.7 693,45.7 692,45.7 692,45.7 691,45.7 691,41.8 690,41.8 690,45.7 689,45.7 689,45.7 688,45.7 688,45.7 687,45.7 687,45.7 686,45.7 686,41.6 685,41.6 685,45.7 684,45.7 684,45.7 683,45.7 683,43.0 682,43.0 682,45.7 681,45.7 681,45.7 680,45.7 680,45.7 679,45.7 679,45.7 678,45.7 678,45.7 677,45.7 677,45.7 676,45.7 676,45.7 675,45.7 675,45.7 674,45.7 674,45.7 673,45.7 673,45.7 672,45.7 672,45.7 671,45.7 671,45.7 670,45.7 670,45.7 669,45.7 669,45.7 668,45.7 668,45.7 667,45.7 667,43.7 666,43.7 666,41.8 665,41.8 665,43.7 664,43.7 664,45.7 663,45.7 663,45.7 662,45.7 662,45.7 661,45.7 661,42.5 660,42.5 660,43.0 659,43.0 659,40.4 658,40.4 658,40.1 657,40.1 657,45.7 656,45.7 656,45.7 655,45.7 655,41.0 654,41.0 654,41.5 653,41.5 653,45.7 652,45.7 652,45.7 651,45.7 651,45.7 650,45.7 650,45.7 649,45.7 649,45.7 648,45.7 648,45.7 647,45.7 647,45.7 646,45.7 646,45.7 645,45.7 645,45.7 644,45.7 644,45.7 643,45.7 643,39.9 642,39.9 642,45.7 641,45.7 641,45.7 640,45.7 640,45.7 639,45.7 639,45.7 638,45.7 638,45.7 637,45.7 637,45.7 636,45.7 636,45.7 635,45.7 635,45.7 634,45.7 634,45.7 633,45.7 633,45.7 632,45.7 632,41.0 631,41.0 631,45.7 630,45.7 630,45.7 629,45.7 629,45.7 628,45.7 628,45.7 627,45.7 627,45.7 626,45.7 626,45.7 625,45.7 625,45.7 624,45.7 624,45.7 623,45.7 623,45.7 622,45.7 622,45.7 621,45.7 621,45.7 620,45.7 620,45.7 619,45.7 619,45.7 618,45.7 618,45.7 617,45.7 617,45.7 616,45.7 616,43.7 615,43.7 615,41.7 614,41.7 614,43.7 613,43.7 613,45.7 612,45.7 612,45.7 611,45.7 611,45.7 610,45.7 610,45.7 609,45.7 609,45.7 608,45.7 608,44.2 607,44.2 607,42.7 606,42.7 606,44.2 605,44.2 605,45.7 604,45.7 604,45.7 603,45.7 603,45.7 602,45.7 602,45.7 601,45.7 601,45.7 600,45.7 600,45.7 599,45.7 599,45.7 598,45.7 598,45.7 597,45.7 597,45.7 596,45.7 596,45.7 595,45.7 595,45.7 594,45.7 594,45.7 593,45.7 593,45.7 592,45.7 592,45.7 591,45.7 591,45.7 590,45.7 590,45.7 589,45.7 589,45.7 588,45.7 588,45.7 587,45.7 587,45.7 586,45.7 586,45.7 585,45.7 585,45.7 584,45.7 584,45.7 583,45.7 583,45.7 582,45.7 582,45.7 581,45.7 581,41.4 580,41.4 580,45.7 579,45.7 579,45.7 578,45.7 578,45.7 577,45.7 577,45.7 576,45.7 576,45.7 575,45.7 575,45.7 574,45.7 574,45.7 573,45.7 573,45.7 572,45.7 572,45.7 571,45.7 571,45.7 570,45.7 570,45.7 569,45.7 569,45.7 568,45.7 568,45.7 567,45.7 567,45.7 566,45.7 566,45.7 565,45.7 565,45.7 564,45.7 564,45.7 563,45.7 563,45.7 562,45.7 562,45.7 561,45.7 561,45.7 560,45.7 560,45.7 559,45.7 559,45.7 558,45.7 558,45.7 557,45.7 557,45.7 556,45.7 556,45.7 555,45.7 555,45.7 554,45.7 554,45.7 553,45.7 553,45.7 552,45.7 552,45.7 551,45.7 551,45.7 550,45.7 550,43.1 549,43.1 549,40.4 548,40.4 548,43.1 547,43.1 547,45.7 546,45.7 546,45.7 545,45.7 545,45.7 544,45.7 544,45.7 543,45.7 543,45.7 542,45.7 542,45.7 541,45.7 541,45.7 540,45.7 540,45.7 539,45.7 539,45.7 538,45.7 538,45.7 537,45.7 537,45.7 536,45.7 536,45.7 535,45.7 535,45.7 534,45.7 534,45.7 533,45.7 533,45.7 532,45.7 532,45.7 531,45.7 531,45.7 530,45.7 530,44.5 529,44.5 529,43.3 528,43.3 528,44.5 527,44.5 527,45.7 526,45.7 526,40.6 525,40.6 525,45.7 524,45.7 524,45.7 523,45.7 523,45.7 522,45.7 522,45.7 521,45.7 521,45.7 520,45.7 520,45.7 519,45.7 519,45.7 518,45.7 518,42.8 517,42.8 517,39.8 516,39.8 516,42.8 515,42.8 515,45.7 514,45.7 514,45.7 513,45.7 513,45.7 512,45.7 512,45.7 511,45.7 511,45.7 510,45.7 510,45.7 509,45.7 509,45.7 508,45.7 508,45.7 507,45.7 507,45.7 506,45.7 506,45.7 505,45.7 505,41.6 504,41.6 504,45.7 503,45.7 503,45.7 502,45.7 502,45.7 501,45.7 501,45.7 500,45.7 500,45.7 499,45.7 499,45.7 498,45.7 498,45.7 497,45.7 497,45.7 496,45.7 496,45.7 495,45.7 495,45.7 494,45.7 494,45.7 493,45.7 493,45.7 492,45.7 492,45.7 491,45.7 491,45.7 490,45.7 490,45.7 489,45.7 489,45.7 488,45.7 488,45.7 487,45.7 487,45.7 486,45.7 486,45.7 485,45.7 485,45.7 484,45.7 484,45.7 483,45.7 483,45.7 482,45.7 482,45.7 481,45.7 481,45.7 480,45.7 480,45.7 479,45.7 479,45.7 478,45.7 478,45.7 477,45.7 477,45.7 476,45.7 476,45.7 475,45.7 475,45.7 474,45.7 474,45.7 473,45.7 473,45.7 472,45.7 472,45.7 471,45.7 471,45.7 470,45.7 470,45.7 469,45.7 469,45.7 468,45.7 468,45.7 467,45.7 467,45.7 466,45.7 466,45.7 465,45.7 465,45.7 464,45.7 464,45.7 463,45.7 463,43.5 462,43.5 462,45.7 461,45.7 461,45.7 460,45.7 460,45.7 459,45.7 459,45.7 458,45.7 458,45.7 457,45.7 457,45.7 456,45.7 456,45.7 455,45.7 455,45.7 454,45.7 454,45.7 453,45.7 453,45.7 452,45.7 452,45.7 451,45.7 451,45.7 450,45.7 450,40.6 449,40.6 449,45.7 448,45.7 448,45.7 447,45.7 447,45.7 446,45.7 446,45.7 445,45.7 445,45.7 444,45.7 444,45.7 443,45.7 443,45.7 442,45.7 442,45.7 441,45.7 441,45.7 440,45.7 440,45.7 439,45.7 439,45.7 438,45.7 438,45.7 437,45.7 437,45.7 436,45.7 436,45.7 435,45.7 435,43.5 434,43.5 434,41.4 433,41.4 433,43.5 432,43.5 432,45.7 431,45.7 431,45.7 430,45.7 430,45.7 429,45.7 429,45.7 428,45.7 428,39.9 427,39.9 427,45.7 426,45.7 426,45.7 425,45.7 425,45.7 424,45.7 424,45.7 423,45.7 423,45.7 422,45.7 422,45.7 421,45.7 421,45.7 420,45.7 420,41.4 419,41.4 419,45.7 418,45.7 418,45.7 417,45.7 417,45.7 416,45.7 416,45.7 415,45.7 415,45.7 414,45.7 414,45.7 413,45.7 413,45.7 412,45.7 412,45.7 411,45.7 411,45.7 410,45.7 410,45.7 409,45.7 409,45.7 408,45.7 408,45.7 407,45.7 407,45.7 406,45.7 406,45.7 405,45.7 405,45.7 404,45.7 404,45.7 403,45.7 403,45.7 402,45.7 402,45.7 401,45.7 401,45.7 400,45.7 400,45.7 399,45.7 399,45.7 398,45.7 398,45.7 397,45.7 397,45.7 396,45.7 396,45.7 395,45.7 395,45.7 394,45.7 394,45.7 393,45.7 393,45.7 392,45.7 392,45.7 391,45.7 391,45.7 390,45.7 390,45.7 389,45.7 389,45.7 388,45.7 388,45.7 387,45.7 387,45.7 386,45.7 386,45.7 385,45.7 385,45.7 384,45.7 384,45.7 383,45.7 383,45.7 382,45.7 382,45.7 381,45.7 381,45.7 380,45.7 380,45.7 379,45.7 379,45.7 378,45.7 378,45.7 377,45.7 377,45.7 376,45.7 376,45.7 375,45.7 375,45.7 374,45.7 374,45.7 373,45.7 373,45.7 372,45.7 372,45.7 371,45.7 371,45.7 370,45.7 370,45.7 369,45.7 369,43.8 368,43.8 368,42.0 367,42.0 367,43.8 366,43.8 366,45.7 365,45.7 365,45.7 364,45.7 364,45.7 363,45.7 363,45.7 362,45.7 362,45.7 361,45.7 361,45.7 360,45.7 360,45.7 359,45.7 359,45.7 358,45.7 358,45.7 357,45.7 357,45.7 356,45.7 356,45.7 355,45.7 355,45.7 354,45.7 354,45.7 353,45.7 353,45.7 352,45.7 352,45.7 351,45.7 351,45.7 350,45.7 350,45.7 349,45.7 349,45.7 348,45.7 348,45.7 347,45.7 347,45.7 346,45.7 346,45.7 345,45.7 345,45.7 344,45.7 344,43.2 343,43.2 343,40.7 342,40.7 342,43.2 341,43.2 341,45.7 340,45.7 340,45.7 339,45.7 339,45.7 338,45.7 338,45.7 337,45.7 337,45.7 336,45.7 336,45.7 335,45.7 335,45.7 334,45.7 334,43.3 333,43.3 333,45.7 332,45.7 332,45.7 331,45.7 331,45.7 330,45.7 330,45.7 329,45.7 329,44.3 328,44.3 328,42.9 327,42.9 327,44.3 326,44.3 326,45.7 325,45.7 325,45.7 324,45.7 324,45.7 323,45.7 323,45.7 322,45.7 322,45.7 321,45.7 321,45.7 320,45.7 320,45.7 319,45.7 319,45.7 318,45.7 318,45.7 317,45.7 317,45.7 316,45.7 316,45.7 315,45.7 315,45.7 314,45.7 314,45.7 313,45.7 313,45.7 312,45.7 312,45.7 311,45.7 311,45.7 310,45.7 310,45.7 309,45.7 309,45.7 308,45.7 308,45.7 307,45.7 307,45.7 306,45.7 306,45.7 305,45.7 305,45.7 304,45.7 304,45.7 303,45.7 303,45.7 302,45.7 302,45.7 301,45.7 301,45.7 300,45.7 300,45.7 299,45.7 299,45.7 298,45.7 298,45.7 297,45.7 297,45.7 296,45.7 296,45.7 295,45.7 295,45.7 294,45.7 294,45.7 293,45.7 293,45.7 292,45.7 292,45.7 291,45.7 291,45.7 290,45.7 290,45.7 289,45.7 289,45.7 288,45.7 288,45.7 287,45.7 287,45.7 286,45.7 286,45.7 285,45.7 285,45.7 284,45.7 284,45.7 283,45.7 283,45.7 282,45.7 282,45.7 281,45.7 281,45.7 280,45.7 280,45.7 279,45.7 279,45.7 278,45.7 278,45.7 277,45.7 277,45.7 276,45.7 276,45.7 275,45.7 275,45.7 274,45.7 274,45.7 273,45.7 273,45.7 272,45.7 272,45.7 271,45.7 271,45.7 270,45.7 270,42.0 269,42.0 269,45.7 268,45.7 268,45.7 267,45.7 267,45.7 266,45.7 266,45.7 265,45.7 265,45.7 264,45.7 264,45.7 263,45.7 263,45.7 262,45.7 262,45.7 261,45.7 261,45.7 260,45.7 260,45.7 259,45.7 259,45.7 258,45.7 258,45.7 257,45.7 257,45.7 256,45.7 256,45.7 255,45.7 255,45.7 254,45.7 254,45.7 253,45.7 253,45.7 252,45.7 252,45.7 251,45.7 251,45.7 250,45.7 250,45.7 249,45.7 249,45.7 248,45.7 248,45.7 247,45.7 247,45.7 246,45.7 246,45.7 245,45.7 245,45.7 244,45.7 244,41.0 243,41.0 243,45.7 242,45.7 242,45.7 241,45.7 241,45.7 240,45.7 240,45.7 239,45.7 239,45.7 238,45.7 238,45.7 237,45.7 237,45.7 236,45.7 236,45.7 235,45.7 235,45.7 234,45.7 234,45.7 233,45.7 233,45.7 232,45.7 232,45.7 231,45.7 231,45.7 230,45.7 230,45.7 229,45.7 229,45.7 228,45.7 228,45.7 227,45.7 227,45.7 226,45.7 226,45.7 225,45.7 225,45.7 224,45.7 224,45.7 223,45.7 223,45.7 222,45.7 222,45.7 221,45.7 221,45.7 220,45.7 220,45.7 219,45.7 219,45.7 218,45.7 218,45.7 217,45.7 217,45.7 216,45.7 216,45.7 215,45.7 215,42.1 214,42.1 214,45.7 213,45.7 213,45.7 212,45.7 212,45.7 211,45.7 211,45.7 210,45.7 210,45.7 209,45.7 209,45.7 208,45.7 208,45.7 207,45.7 207,45.7 206,45.7 206,45.7 205,45.7 205,45.7 204,45.7 204,45.7 203,45.7 203,45.7 202,45.7 202,45.7 201,45.7 201,45.7 200,45.7 200,45.7 199,45.7 199,45.7 198,45.7 198,45.7 197,45.7 197,45.7 196,45.7 196,45.7 195,45.7 195,45.7 194,45.7 194,43.3 193,43.3 193,41.0 192,41.0 192,43.3 191,43.3 191,45.7 190,45.7 190,45.7 189,45.7 189,45.7 188,45.7 188,45.7 187,45.7 187,45.7 186,45.7 186,45.7 185,45.7 185,43.0 184,43.0 184,45.7 183,45.7 183,41.7 182,41.7 182,45.7 181,45.7 181,45.7 180,45.7 180,45.7 179,45.7 179,45.7 178,45.7 178,45.7 177,45.7 177,45.7 176,45.7 176,45.7 175,45.7 175,45.7 174,45.7 174,45.7 173,45.7 173,45.7 172,45.7 172,45.7 171,45.7 171,45.7 170,45.7 170,45.7 169,45.7 169,45.7 168,45.7 168,45.7 167,45.7 167,45.7 166,45.7 166,45.7 165,45.7 165,45.7 164,45.7 164,45.7 163,45.7 163,41.4 162,41.4 162,45.7 161,45.7 161,45.7 160,45.7 160,45.7 159,45.7 159,43.2 158,43.2 158,45.7 157,45.7 157,45.7 156,45.7 156,45.7 155,45.7 155,45.7 154,45.7 154,45.7 153,45.7 153,45.7 152,45.7 152,45.7 151,45.7 151,45.7 150,45.7 150,42.6 149,42.6 149,45.7 148,45.7 148,45.7 147,45.7 147,45.7 146,45.7 146,45.7 145,45.7 145,45.7 144,45.7 144,45.7 143,45.7 143,45.7 142,45.7 142,45.7 141,45.7 141,45.7 140,45.7 140,45.7 139,45.7 139,45.7 138,45.7 138,43.2 137,43.2 137,40.7 136,40.7 136,43.2 135,43.2 135,45.7 134,45.7 134,45.7 133,45.7 133,45.7 132,45.7 132,45.7 131,45.7 131,45.7 130,45.7 130,45.7 129,45.7 129,45.7 128,45.7 128,43.5 127,43.5 127,40.4 126,40.4 126,45.7 125,45.7 125,45.7 124,45.7 124,45.7 123,45.7 123,45.7 122,45.7 122,43.6 121,43.6 121,41.5 120,41.5 120,43.5 119,43.5 119,41.3 118,41.3 118,43.5 117,43.5 117,45.7 116,45.7 116,45.7 115,45.7 115,45.7 114,45.7 114,45.7 113,45.7 113,45.7 112,45.7 112,45.7 111,45.7 111,45.7 110,45.7 110,45.7 109,45.7 109,45.7 108,45.7 108,45.7 107,45.7 107,45.7 106,45.7 106,45.7 105,45.7 105,40.1 104,40.1 104,45.7 103,45.7 103,45.7 102,45.7 102,45.7 101,45.7 101,45.7 100,45.7 100,45.7 99,45.7 99,45.7 98,45.7 98,45.7 97,45.7 97,45.7 96,45.7 96,45.7 95,45.7 95,45.7 94,45.7 94,42.9 93,42.9 93,45.7 92,45.7 92,45.7 91,45.7 91,45.7 90,45.7 90,45.7 89,45.7 89,45.7 88,45.7 88,45.7 87,45.7 87,45.7 86,45.7 86,45.7 85,45.7 85,45.7 84,45.7 84,45.7 83,45.7 83,45.7 82,45.7 82,45.7 81,45.7 81,45.7 80,45.7 80,40.5 79,40.5 79,44.3 78,44.3 78,38.8 77,38.8 77,37.4 76,37.4 76,37.1 75,37.1 75,37.1 74,37.1 74,39.2 73,39.2 73,38.8 72,38.8 72,40.0 71,40.0 71,45.1 70,45.1 70,45.4 69,45.4 69,45.6 68,45.6 68,38.6 67,38.6 67,39.1 66,39.1 66,38.2 65,38.2 65,39.3 64,39.3 64,38.7 63,38.7 63,40.0 62,40.0 62,40.7 61,40.7 61,38.8 60,38.8 60,38.7 59,38.7 59,37.9 58,37.9 58,38.9 57,38.9 57,38.5 56,38.5 56,39.4 55,39.4 55,41.2 54,41.2 54,44.0 53,44.0 53,43.7 52,43.7 52,37.7 51,37.7 51,38.0 50,38.0 50,38.8 49,38.8 49,38.7 48,38.7 48,40.8 47,40.8 47,40.5 46,40.5 46,41.1 45,41.1 45,40.1 44,40.1 44,41.7 43,41.7 43,45.3 42,45.3 42,45.2 41,45.2 41,41.9 40,41.9 40,41.9 39,41.9 39,37.4 38,37.4 38,36.9 37,36.9 37,38.3 36,38.3 36,39.9 35,39.9 35,40.1 34,40.1 34,38.8 33,38.8 33,38.8 32,38.8 32,35.9 31,35.9 31,37.0 30,37.0 30,39.5 29,39.5 29,39.9 28,39.9 28,39.7 27,39.7 27,40.1 26,40.1 26,37.7 25,37.7 25,38.2 24,38.2 24,39.2 23,39.2 23,38.6 22,38.6 22,35.1 21,35.1 21,35.0 20,35.0 20,35.7 19,35.7 19,36.0 18,36.0 18,37.0 17,37.0 17,39.8 16,39.8 16,36.8 15,36.8 15,37.3 14,37.3 14,38.1 13,38.1 13,40.9 12,40.9 12,40.4 11,40.4 11,38.7 10,38.7 10,38.8 9,38.8 9,37.0 8,37.0 8,38.0 7,38.0 7,41.2 6,41.2 6,46.2 5,46.2 5,42.3 4,42.3 4,44.8 3,44.8 3,45.2 2,45.2 2,42.9 1,42.9 1,43.8 0,43.8" fill="#768890"/></svg>
</div>
<svg class="a" style="left:333px;top:226px;" width="10" height="11" viewBox="0 0 10 11"><path d="M1.5 1.5 L8.5 9.5 M8.5 1.5 L1.5 9.5" stroke="#8296a2" stroke-width="1.2"/></svg>
<div class="t" style="left:345.06px;top:225.61px;font-size:11.68px;color:#8296a2;transform:scaleX(0.9199);">01 The Largest</div>
<div class="a" style="left:1147px;top:185px;width:19px;height:471px;background:repeating-conic-gradient(#30373d 0 25%,#383f45 0 50%) 0 0/2px 2px"></div>
<div class="a" style="left:1147px;top:186px;width:19px;height:19px;background:#4d555c;box-shadow:inset 0 0 0 1px #5f676d"></div>
<svg class="a" style="left:1150px;top:190px;" width="13" height="10" viewBox="0 0 13 10"><path d="M2 7 L6.5 2.5 L11 7" fill="none" stroke="#1d2327" stroke-width="1.2"/></svg>
<div class="a" style="left:1147px;top:206px;width:19px;height:32px;background:#4d555c;box-shadow:inset 0 0 0 1px #5f676d"></div>
<div class="a" style="left:1147px;top:637px;width:19px;height:19px;background:#4d555c;box-shadow:inset 0 0 0 1px #5f676d"></div>
<svg class="a" style="left:1150px;top:642px;" width="13" height="10" viewBox="0 0 13 10"><path d="M2 3 L6.5 7.5 L11 3" fill="none" stroke="#1d2327" stroke-width="1.2"/></svg>
<svg class="a" style="left:1164px;top:654px;" width="9" height="9" viewBox="0 0 9 9"><path d="M8 1.5 V8 H1.5 Z" fill="#2c3237"/></svg>
</body></html>
